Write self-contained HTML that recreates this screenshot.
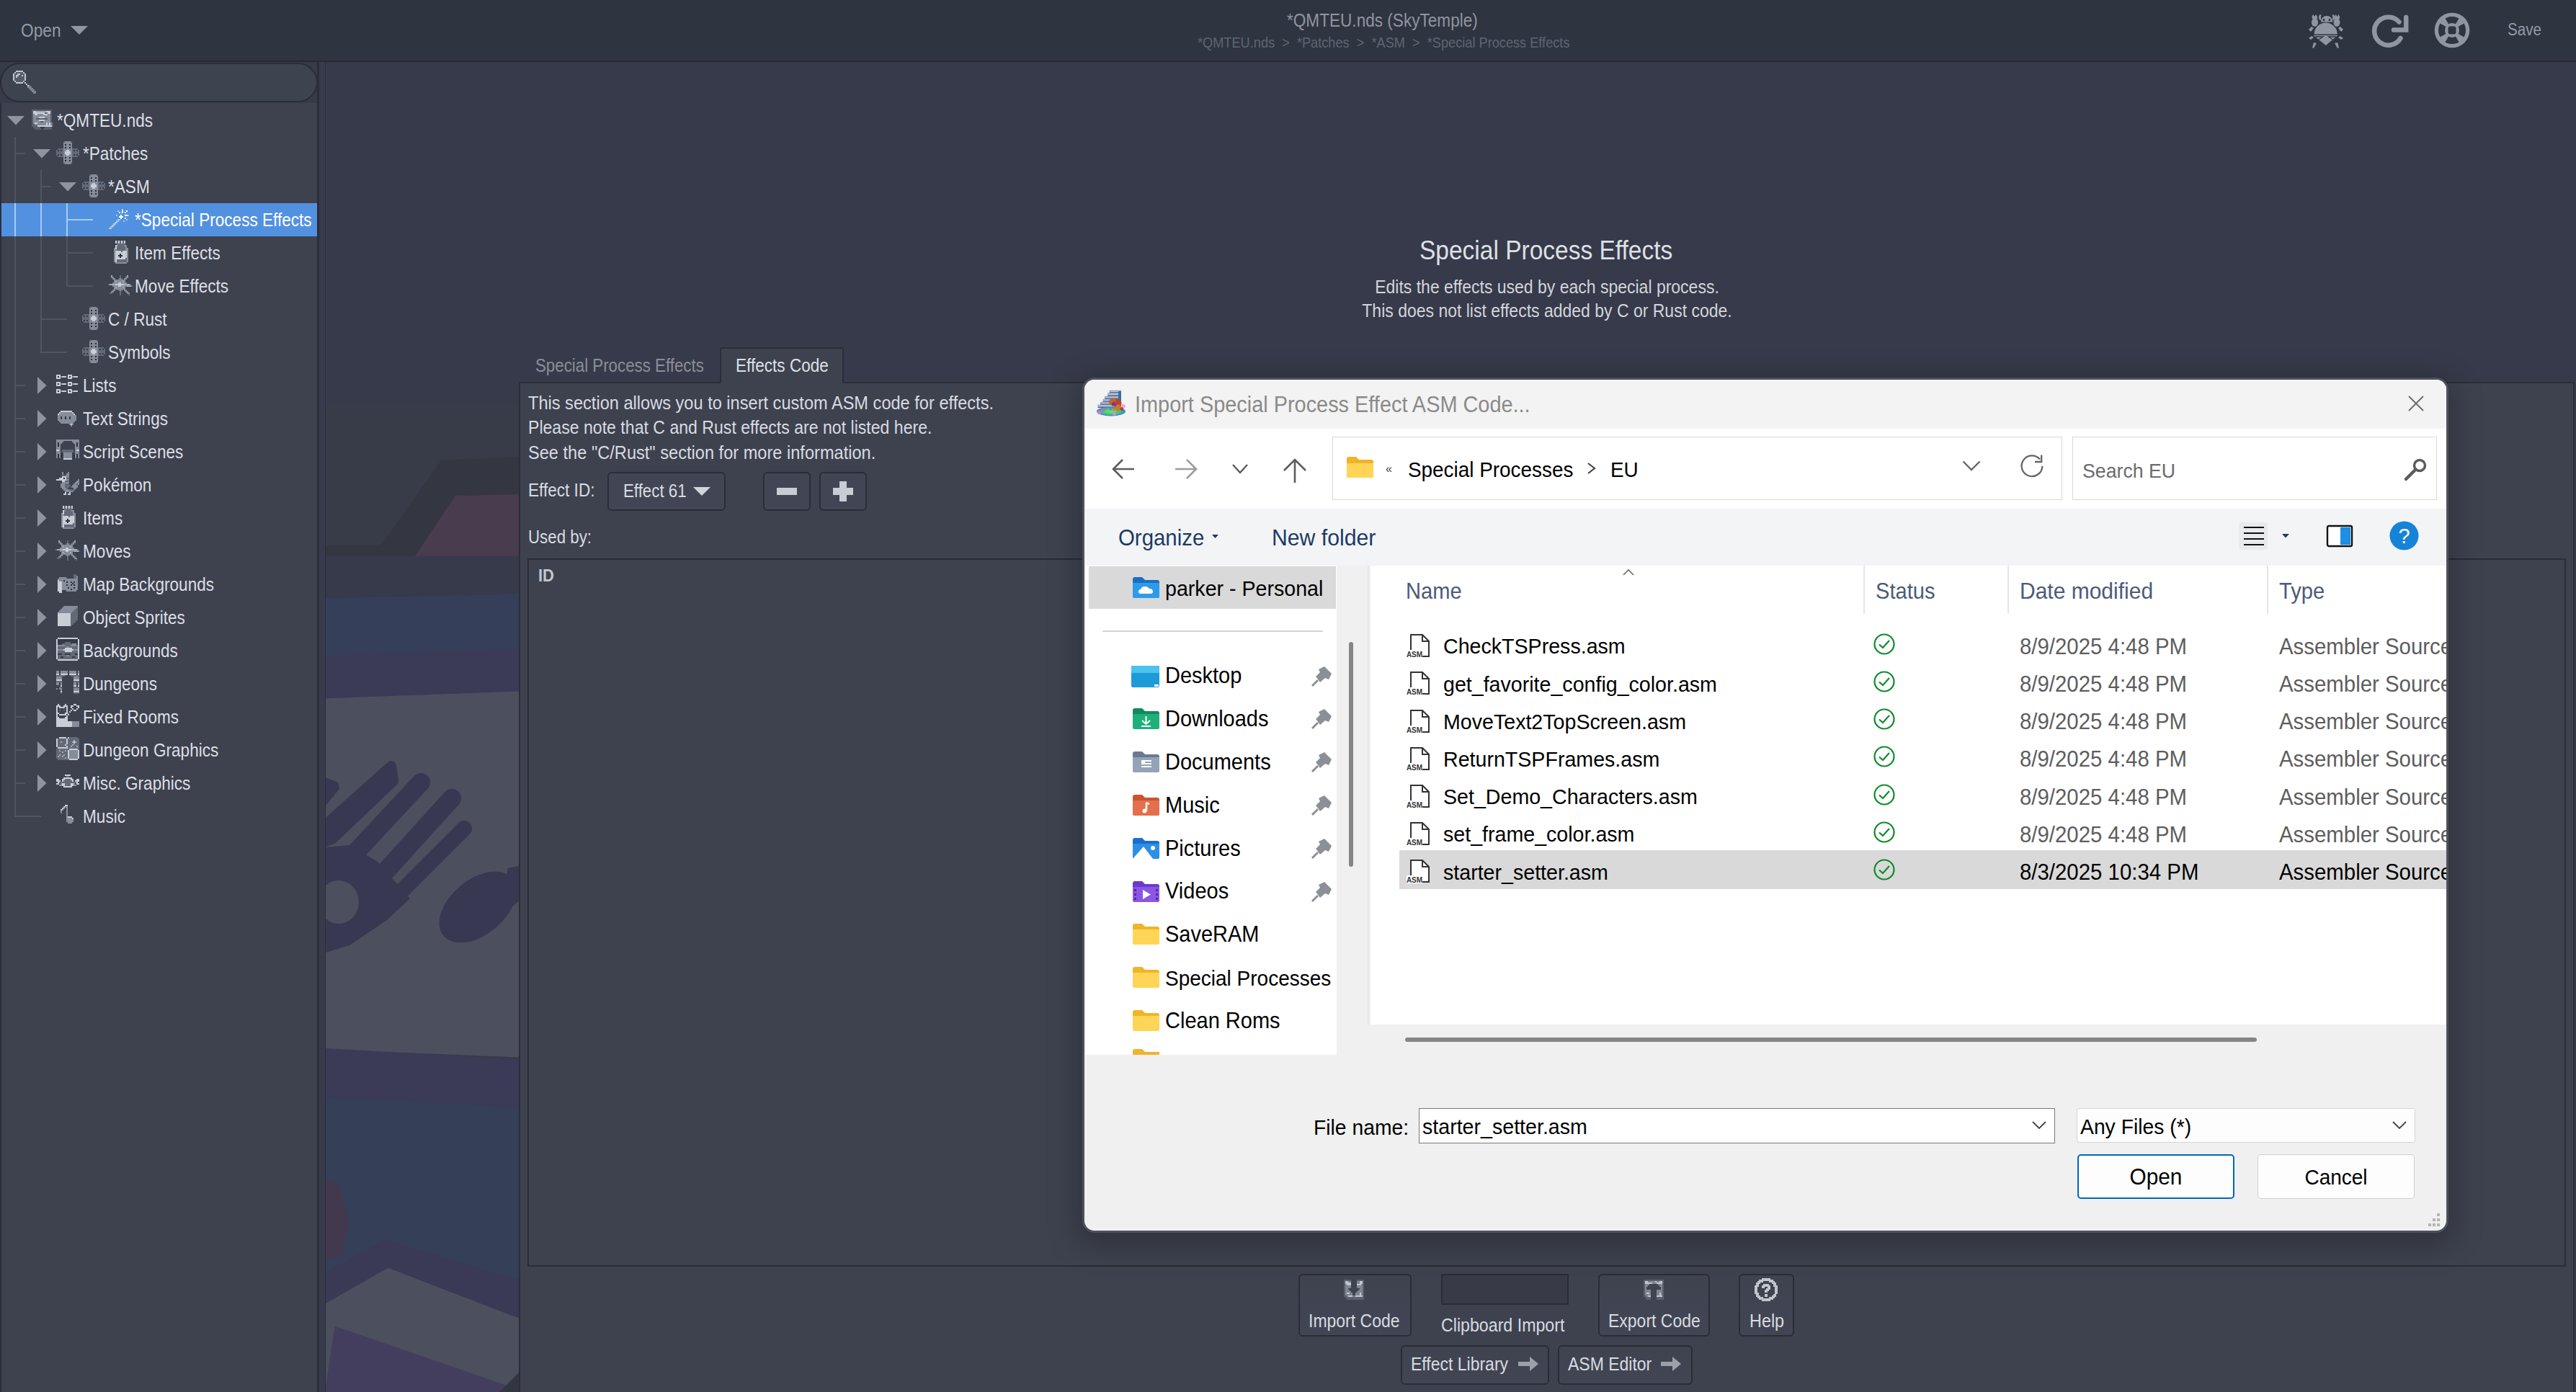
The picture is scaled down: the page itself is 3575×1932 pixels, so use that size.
<!DOCTYPE html><html><head><meta charset="utf-8"><style>
html,body{margin:0;padding:0;} body{width:3575px;height:1932px;overflow:hidden;position:relative;background:#383b4a;font-family:"Liberation Sans", sans-serif;}
.t{position:absolute;white-space:pre;} .r{position:absolute;box-sizing:border-box;} svg{position:absolute;overflow:visible;}
</style></head><body>
<div class="r" style="left:0.0px;top:0.0px;width:3575.0px;height:84.0px;background:#2f3441;"></div>
<div class="r" style="left:0.0px;top:84.0px;width:3575.0px;height:2.0px;background:#262a33;"></div>
<div class="t" style="left:28.7px;top:30.0px;font-size:25.42px;line-height:25.42px;color:#939aa6;font-weight:normal;transform:scaleX(0.8929);transform-origin:left top;">Open</div>
<svg style="left:98.0px;top:36.0px;" width="24" height="12" viewBox="0 0 24 12"><polygon points="0,0 24,0 12,12" fill="#8e96a2"/></svg>
<div class="t" style="left:1785.7px;top:15.5px;font-size:25.31px;line-height:25.31px;color:#8f95a0;font-weight:normal;transform:scaleX(0.8929);transform-origin:left top;">*QMTEU.nds (SkyTemple)</div>
<div class="t" style="left:1662.0px;top:49.2px;font-size:20.38px;line-height:20.38px;color:#5f6571;font-weight:normal;transform:scaleX(0.8929);transform-origin:left top;">*QMTEU.nds  &gt;  *Patches  &gt;  *ASM  &gt;  *Special Process Effects</div>
<div class="t" style="left:3480.0px;top:30.4px;font-size:23.07px;line-height:23.07px;color:#939aa6;font-weight:normal;transform:scaleX(0.8929);transform-origin:left top;">Save</div>
<svg style="left:3203.0px;top:17.0px;" width="50" height="50" viewBox="0 0 50 50"><g fill="#8f96a1">
<path d="M8.6 30.6 A16.1 16.1 0 0 1 40.8 30.6 Z"/>
<path d="M7.5 32 L41.5 32 L24.8 46 Z"/>
<path d="M17.8 13.4 A8.3 8.3 0 0 1 34.4 13.4 Z"/>
<path d="M16.5 3 Q13.5 7 16.5 11 L18.5 10 Q17 7 18.5 4Z"/><path d="M35.7 3 Q38.7 7 35.7 11 L33.7 10 Q35.2 7 33.7 4Z"/>
<ellipse cx="9.5" cy="14" rx="4.5" ry="6"/><ellipse cx="40" cy="14" rx="4.5" ry="6"/>
<path d="M5.5 6 L7 3 L9 6 L11 3 L13 6 L13 9 L6 9Z"/><path d="M37 6 L38.5 3 L40.5 6 L42.5 3 L44 6 L44 9 L37 9Z"/>
<path d="M1 24 L5 20 L8 22 L4 27Z"/><path d="M49 24 L45 20 L42 22 L46 27Z"/>
<path d="M1 36 L5 33 L8 35 L4 38Z"/><path d="M49 36 L45 33 L42 35 L46 38Z"/>
<path d="M6 49 L8 42 L12 43 L8 50Z"/><path d="M43 49 L41 42 L37 43 L41 50Z"/>
</g>
<g fill="#2f3441"><circle cx="22" cy="10.5" r="1.5"/><circle cx="30" cy="10.5" r="1.5"/></g>
<g fill="none" stroke="#2f3441" stroke-width="1.3"><path d="M11 34 L21 34 L12 40Z"/><path d="M38.5 34 L28.5 34 L37.5 40Z"/></g></svg>
<svg style="left:3289.0px;top:19.0px;" width="56" height="50" viewBox="0 0 56 50"><path d="M42.5 34 A19.5 19.5 0 1 1 40.5 11.5" fill="none" stroke="#8f96a1" stroke-width="6.5" stroke-linecap="round"/><path d="M50.2 5 L50.2 22.5 L33 22.5" fill="none" stroke="#8f96a1" stroke-width="6.5" stroke-linecap="round" stroke-linejoin="miter"/></svg>
<svg style="left:3378.0px;top:17.0px;" width="50" height="50" viewBox="0 0 50 50"><circle cx="25" cy="25" r="24.3" fill="#8f96a1"/><circle cx="25" cy="25" r="14.5" fill="none" stroke="#2f3441" stroke-width="9"/><path d="M31.93 29.00 L42.32 35.00 L35.00 42.32 L29.00 31.93Z" fill="#8f96a1"/><path d="M21.00 31.93 L15.00 42.32 L7.68 35.00 L18.07 29.00Z" fill="#8f96a1"/><path d="M18.07 21.00 L7.68 15.00 L15.00 7.68 L21.00 18.07Z" fill="#8f96a1"/><path d="M29.00 18.07 L35.00 7.68 L42.32 15.00 L31.93 21.00Z" fill="#8f96a1"/><rect x="19.5" y="19.5" width="11" height="11" rx="3" fill="#2f3441"/></svg>
<div class="r" style="left:0.0px;top:86.0px;width:442.0px;height:1846.0px;background:#363a49;"></div>
<div class="r" style="left:0.0px;top:86.5px;width:441.0px;height:55.0px;background:#3e4350;border:2px solid #2b2e39;border-radius:28px;"></div>
<svg style="left:18.0px;top:98.0px;" width="32" height="32" viewBox="0 0 32 32"><rect x="4" y="0" width="10" height="2" fill="#c0c5d0"/><rect x="2" y="2" width="2" height="2" fill="#c0c5d0"/><rect x="4" y="2" width="10" height="2" fill="#575c69"/><rect x="14" y="2" width="2" height="2" fill="#c0c5d0"/><rect x="0" y="4" width="2" height="2" fill="#c0c5d0"/><rect x="2" y="4" width="4" height="2" fill="#575c69"/><rect x="6" y="4" width="4" height="2" fill="#c0c5d0"/><rect x="10" y="4" width="6" height="2" fill="#575c69"/><rect x="16" y="4" width="2" height="2" fill="#c0c5d0"/><rect x="0" y="6" width="2" height="2" fill="#c0c5d0"/><rect x="2" y="6" width="2" height="2" fill="#575c69"/><rect x="4" y="6" width="4" height="2" fill="#c0c5d0"/><rect x="8" y="6" width="4" height="2" fill="#575c69"/><rect x="12" y="6" width="2" height="2" fill="#c0c5d0"/><rect x="14" y="6" width="2" height="2" fill="#575c69"/><rect x="16" y="6" width="2" height="2" fill="#c0c5d0"/><rect x="0" y="8" width="2" height="2" fill="#c0c5d0"/><rect x="2" y="8" width="2" height="2" fill="#575c69"/><rect x="4" y="8" width="2" height="2" fill="#c0c5d0"/><rect x="6" y="8" width="10" height="2" fill="#575c69"/><rect x="16" y="8" width="2" height="2" fill="#c0c5d0"/><rect x="0" y="10" width="2" height="2" fill="#c0c5d0"/><rect x="2" y="10" width="14" height="2" fill="#575c69"/><rect x="16" y="10" width="2" height="2" fill="#c0c5d0"/><rect x="0" y="12" width="2" height="2" fill="#c0c5d0"/><rect x="2" y="12" width="14" height="2" fill="#575c69"/><rect x="16" y="12" width="2" height="2" fill="#c0c5d0"/><rect x="2" y="14" width="2" height="2" fill="#c0c5d0"/><rect x="4" y="14" width="10" height="2" fill="#575c69"/><rect x="14" y="14" width="2" height="2" fill="#c0c5d0"/><rect x="4" y="16" width="10" height="2" fill="#c0c5d0"/><rect x="16" y="16" width="2" height="2" fill="#c0c5d0"/><rect x="18" y="18" width="2" height="2" fill="#c0c5d0"/><rect x="20" y="20" width="2" height="2" fill="#c0c5d0"/><rect x="22" y="20" width="2" height="2" fill="#7d8391"/><rect x="20" y="22" width="6" height="2" fill="#7d8391"/><rect x="22" y="24" width="6" height="2" fill="#7d8391"/><rect x="24" y="26" width="6" height="2" fill="#7d8391"/><rect x="26" y="28" width="6" height="2" fill="#7d8391"/><rect x="28" y="30" width="4" height="2" fill="#7d8391"/></svg>
<div class="r" style="left:0.0px;top:143.0px;width:440.0px;height:1789.0px;background:#3e424f;border-left:2px solid #2b2e38;"></div>
<div class="r" style="left:440.0px;top:86.0px;width:12.0px;height:1846.0px;background:#383b4b;border-left:3.6px solid #2b2d38;border-right:1.9px solid #2b2d38;"></div>
<div class="r" style="left:2.0px;top:282.0px;width:438.0px;height:46.0px;background:#5291e0;"></div>
<div class="r" style="left:20.0px;top:190.0px;width:2.0px;height:943.0px;background:#50545f;"></div>
<div class="r" style="left:56.0px;top:236.0px;width:2.0px;height:253.0px;background:#50545f;"></div>
<div class="r" style="left:92.0px;top:282.0px;width:2.0px;height:115.0px;background:#50545f;"></div>
<div class="r" style="left:20.0px;top:212.0px;width:15.0px;height:2.0px;background:#50545f;"></div>
<div class="r" style="left:56.0px;top:258.0px;width:15.0px;height:2.0px;background:#50545f;"></div>
<div class="r" style="left:92.0px;top:304.0px;width:37.0px;height:2.0px;background:#50545f;"></div>
<div class="r" style="left:92.0px;top:350.0px;width:37.0px;height:2.0px;background:#50545f;"></div>
<div class="r" style="left:92.0px;top:396.0px;width:37.0px;height:2.0px;background:#50545f;"></div>
<div class="r" style="left:56.0px;top:442.0px;width:37.0px;height:2.0px;background:#50545f;"></div>
<div class="r" style="left:56.0px;top:488.0px;width:37.0px;height:2.0px;background:#50545f;"></div>
<div class="r" style="left:20.0px;top:534.0px;width:15.0px;height:2.0px;background:#50545f;"></div>
<div class="r" style="left:20.0px;top:580.0px;width:15.0px;height:2.0px;background:#50545f;"></div>
<div class="r" style="left:20.0px;top:626.0px;width:15.0px;height:2.0px;background:#50545f;"></div>
<div class="r" style="left:20.0px;top:672.0px;width:15.0px;height:2.0px;background:#50545f;"></div>
<div class="r" style="left:20.0px;top:718.0px;width:15.0px;height:2.0px;background:#50545f;"></div>
<div class="r" style="left:20.0px;top:764.0px;width:15.0px;height:2.0px;background:#50545f;"></div>
<div class="r" style="left:20.0px;top:810.0px;width:15.0px;height:2.0px;background:#50545f;"></div>
<div class="r" style="left:20.0px;top:856.0px;width:15.0px;height:2.0px;background:#50545f;"></div>
<div class="r" style="left:20.0px;top:902.0px;width:15.0px;height:2.0px;background:#50545f;"></div>
<div class="r" style="left:20.0px;top:948.0px;width:15.0px;height:2.0px;background:#50545f;"></div>
<div class="r" style="left:20.0px;top:994.0px;width:15.0px;height:2.0px;background:#50545f;"></div>
<div class="r" style="left:20.0px;top:1040.0px;width:15.0px;height:2.0px;background:#50545f;"></div>
<div class="r" style="left:20.0px;top:1086.0px;width:15.0px;height:2.0px;background:#50545f;"></div>
<div class="r" style="left:20.0px;top:1132.0px;width:37.0px;height:2.0px;background:#50545f;"></div>
<div class="r" style="left:20.0px;top:282.0px;width:2.0px;height:46.0px;background:#a9c9f2;"></div>
<div class="r" style="left:56.0px;top:282.0px;width:2.0px;height:46.0px;background:#a9c9f2;"></div>
<div class="r" style="left:92.0px;top:282.0px;width:2.0px;height:46.0px;background:#a9c9f2;"></div>
<div class="r" style="left:92.0px;top:304.0px;width:37.0px;height:2.0px;background:#a9c9f2;"></div>
<svg style="left:10.0px;top:161.0px;" width="24" height="13" viewBox="0 0 24 13"><polygon points="0,0 24,0 12,12.5" fill="#8e939e"/></svg>
<svg style="left:44.0px;top:152.0px;" width="30" height="28" viewBox="0 0 30 28"><rect x="0" y="0" width="28" height="2" fill="#5a5f6b"/><rect x="0" y="2" width="2" height="2" fill="#5a5f6b"/><rect x="2" y="2" width="4" height="2" fill="#c8cdd6"/><rect x="6" y="2" width="14" height="2" fill="#a3a9b4"/><rect x="20" y="2" width="6" height="2" fill="#c8cdd6"/><rect x="26" y="2" width="2" height="2" fill="#5a5f6b"/><rect x="0" y="4" width="2" height="2" fill="#5a5f6b"/><rect x="2" y="4" width="16" height="2" fill="#c8cdd6"/><rect x="18" y="4" width="4" height="2" fill="#646977"/><rect x="22" y="4" width="4" height="2" fill="#c8cdd6"/><rect x="26" y="4" width="2" height="2" fill="#5a5f6b"/><rect x="0" y="6" width="2" height="2" fill="#5a5f6b"/><rect x="2" y="6" width="2" height="2" fill="#868c99"/><rect x="4" y="6" width="4" height="2" fill="#c8cdd6"/><rect x="8" y="6" width="8" height="2" fill="#868c99"/><rect x="16" y="6" width="6" height="2" fill="#c8cdd6"/><rect x="22" y="6" width="4" height="2" fill="#868c99"/><rect x="26" y="6" width="2" height="2" fill="#5a5f6b"/><rect x="0" y="8" width="2" height="2" fill="#5a5f6b"/><rect x="2" y="8" width="24" height="2" fill="#868c99"/><rect x="26" y="8" width="2" height="2" fill="#5a5f6b"/><rect x="0" y="10" width="2" height="2" fill="#5a5f6b"/><rect x="2" y="10" width="8" height="2" fill="#868c99"/><rect x="10" y="10" width="8" height="2" fill="#c8cdd6"/><rect x="18" y="10" width="8" height="2" fill="#868c99"/><rect x="26" y="10" width="2" height="2" fill="#5a5f6b"/><rect x="0" y="12" width="2" height="2" fill="#5a5f6b"/><rect x="2" y="12" width="4" height="2" fill="#868c99"/><rect x="6" y="12" width="16" height="2" fill="#5a5f6b"/><rect x="22" y="12" width="4" height="2" fill="#868c99"/><rect x="26" y="12" width="2" height="2" fill="#5a5f6b"/><rect x="0" y="14" width="2" height="2" fill="#5a5f6b"/><rect x="2" y="14" width="8" height="2" fill="#868c99"/><rect x="10" y="14" width="8" height="2" fill="#c8cdd6"/><rect x="18" y="14" width="8" height="2" fill="#868c99"/><rect x="26" y="14" width="2" height="2" fill="#5a5f6b"/><rect x="0" y="16" width="2" height="2" fill="#5a5f6b"/><rect x="2" y="16" width="10" height="2" fill="#868c99"/><rect x="12" y="16" width="4" height="2" fill="#5a5f6b"/><rect x="16" y="16" width="10" height="2" fill="#868c99"/><rect x="26" y="16" width="2" height="2" fill="#5a5f6b"/><rect x="0" y="18" width="2" height="2" fill="#5a5f6b"/><rect x="2" y="18" width="2" height="2" fill="#868c99"/><rect x="4" y="18" width="4" height="2" fill="#c8cdd6"/><rect x="8" y="18" width="12" height="2" fill="#868c99"/><rect x="20" y="18" width="2" height="2" fill="#c8cdd6"/><rect x="22" y="18" width="2" height="2" fill="#868c99"/><rect x="24" y="18" width="2" height="2" fill="#c8cdd6"/><rect x="26" y="18" width="2" height="2" fill="#868c99"/><rect x="28" y="18" width="2" height="2" fill="#5a5f6b"/><rect x="0" y="20" width="4" height="2" fill="#5a5f6b"/><rect x="4" y="20" width="16" height="2" fill="#868c99"/><rect x="20" y="20" width="2" height="2" fill="#c8cdd6"/><rect x="22" y="20" width="2" height="2" fill="#868c99"/><rect x="24" y="20" width="2" height="2" fill="#c8cdd6"/><rect x="26" y="20" width="2" height="2" fill="#868c99"/><rect x="28" y="20" width="2" height="2" fill="#5a5f6b"/><rect x="0" y="22" width="8" height="2" fill="#5a5f6b"/><rect x="8" y="22" width="20" height="2" fill="#c8cdd6"/><rect x="28" y="22" width="2" height="2" fill="#5a5f6b"/><rect x="2" y="24" width="10" height="2" fill="#5a5f6b"/><rect x="12" y="24" width="6" height="2" fill="#363a46"/><rect x="18" y="24" width="10" height="2" fill="#5a5f6b"/><rect x="4" y="26" width="10" height="2" fill="#5a5f6b"/><rect x="14" y="26" width="2" height="2" fill="#363a46"/><rect x="16" y="26" width="12" height="2" fill="#5a5f6b"/></svg>
<div class="t" style="left:79.0px;top:154.7px;font-size:25.31px;line-height:25.31px;color:#dcdfe5;font-weight:normal;transform:scaleX(0.8929);transform-origin:left top;">*QMTEU.nds</div>
<svg style="left:46.0px;top:207.0px;" width="24" height="13" viewBox="0 0 24 13"><polygon points="0,0 24,0 12,12.5" fill="#8e939e"/></svg>
<svg style="left:78.0px;top:196.0px;" width="32" height="32" viewBox="0 0 32 32"><rect x="10" y="0" width="2" height="2" fill="#5a5f6b"/><rect x="12" y="0" width="8" height="2" fill="#858b98"/><rect x="20" y="0" width="2" height="2" fill="#5a5f6b"/><rect x="10" y="2" width="12" height="2" fill="#858b98"/><rect x="10" y="4" width="2" height="2" fill="#858b98"/><rect x="12" y="4" width="2" height="2" fill="#2c303b"/><rect x="14" y="4" width="4" height="2" fill="#858b98"/><rect x="18" y="4" width="2" height="2" fill="#2c303b"/><rect x="20" y="4" width="2" height="2" fill="#858b98"/><rect x="10" y="6" width="12" height="2" fill="#858b98"/><rect x="10" y="8" width="2" height="2" fill="#858b98"/><rect x="12" y="8" width="2" height="2" fill="#2c303b"/><rect x="14" y="8" width="4" height="2" fill="#858b98"/><rect x="18" y="8" width="2" height="2" fill="#2c303b"/><rect x="20" y="8" width="2" height="2" fill="#858b98"/><rect x="2" y="10" width="8" height="2" fill="#646977"/><rect x="10" y="10" width="12" height="2" fill="#858b98"/><rect x="22" y="10" width="8" height="2" fill="#646977"/><rect x="0" y="12" width="2" height="2" fill="#646977"/><rect x="2" y="12" width="2" height="2" fill="#363a46"/><rect x="4" y="12" width="2" height="2" fill="#646977"/><rect x="6" y="12" width="2" height="2" fill="#363a46"/><rect x="8" y="12" width="2" height="2" fill="#646977"/><rect x="10" y="12" width="4" height="2" fill="#858b98"/><rect x="14" y="12" width="4" height="2" fill="#c8cdd6"/><rect x="18" y="12" width="4" height="2" fill="#858b98"/><rect x="22" y="12" width="2" height="2" fill="#646977"/><rect x="24" y="12" width="2" height="2" fill="#363a46"/><rect x="26" y="12" width="2" height="2" fill="#646977"/><rect x="28" y="12" width="2" height="2" fill="#363a46"/><rect x="30" y="12" width="2" height="2" fill="#646977"/><rect x="0" y="14" width="10" height="2" fill="#646977"/><rect x="10" y="14" width="2" height="2" fill="#858b98"/><rect x="12" y="14" width="8" height="2" fill="#c8cdd6"/><rect x="20" y="14" width="2" height="2" fill="#858b98"/><rect x="22" y="14" width="10" height="2" fill="#646977"/><rect x="0" y="16" width="10" height="2" fill="#646977"/><rect x="10" y="16" width="2" height="2" fill="#858b98"/><rect x="12" y="16" width="8" height="2" fill="#c8cdd6"/><rect x="20" y="16" width="2" height="2" fill="#858b98"/><rect x="22" y="16" width="10" height="2" fill="#646977"/><rect x="0" y="18" width="2" height="2" fill="#646977"/><rect x="2" y="18" width="2" height="2" fill="#363a46"/><rect x="4" y="18" width="2" height="2" fill="#646977"/><rect x="6" y="18" width="2" height="2" fill="#363a46"/><rect x="8" y="18" width="2" height="2" fill="#646977"/><rect x="10" y="18" width="4" height="2" fill="#858b98"/><rect x="14" y="18" width="4" height="2" fill="#c8cdd6"/><rect x="18" y="18" width="4" height="2" fill="#858b98"/><rect x="22" y="18" width="2" height="2" fill="#646977"/><rect x="24" y="18" width="2" height="2" fill="#363a46"/><rect x="26" y="18" width="2" height="2" fill="#646977"/><rect x="28" y="18" width="2" height="2" fill="#363a46"/><rect x="30" y="18" width="2" height="2" fill="#646977"/><rect x="2" y="20" width="8" height="2" fill="#646977"/><rect x="10" y="20" width="12" height="2" fill="#858b98"/><rect x="22" y="20" width="8" height="2" fill="#646977"/><rect x="10" y="22" width="2" height="2" fill="#858b98"/><rect x="12" y="22" width="2" height="2" fill="#2c303b"/><rect x="14" y="22" width="4" height="2" fill="#858b98"/><rect x="18" y="22" width="2" height="2" fill="#2c303b"/><rect x="20" y="22" width="2" height="2" fill="#858b98"/><rect x="10" y="24" width="12" height="2" fill="#858b98"/><rect x="10" y="26" width="2" height="2" fill="#858b98"/><rect x="12" y="26" width="2" height="2" fill="#2c303b"/><rect x="14" y="26" width="4" height="2" fill="#858b98"/><rect x="18" y="26" width="2" height="2" fill="#2c303b"/><rect x="20" y="26" width="2" height="2" fill="#858b98"/><rect x="10" y="28" width="12" height="2" fill="#858b98"/><rect x="10" y="30" width="2" height="2" fill="#5a5f6b"/><rect x="12" y="30" width="8" height="2" fill="#858b98"/><rect x="20" y="30" width="2" height="2" fill="#5a5f6b"/></svg>
<div class="t" style="left:114.7px;top:200.7px;font-size:25.31px;line-height:25.31px;color:#dcdfe5;font-weight:normal;transform:scaleX(0.8929);transform-origin:left top;">*Patches</div>
<svg style="left:82.0px;top:253.0px;" width="24" height="13" viewBox="0 0 24 13"><polygon points="0,0 24,0 12,12.5" fill="#8e939e"/></svg>
<svg style="left:114.0px;top:242.0px;" width="32" height="32" viewBox="0 0 32 32"><rect x="10" y="0" width="2" height="2" fill="#5a5f6b"/><rect x="12" y="0" width="8" height="2" fill="#858b98"/><rect x="20" y="0" width="2" height="2" fill="#5a5f6b"/><rect x="10" y="2" width="12" height="2" fill="#858b98"/><rect x="10" y="4" width="2" height="2" fill="#858b98"/><rect x="12" y="4" width="2" height="2" fill="#2c303b"/><rect x="14" y="4" width="4" height="2" fill="#858b98"/><rect x="18" y="4" width="2" height="2" fill="#2c303b"/><rect x="20" y="4" width="2" height="2" fill="#858b98"/><rect x="10" y="6" width="12" height="2" fill="#858b98"/><rect x="10" y="8" width="2" height="2" fill="#858b98"/><rect x="12" y="8" width="2" height="2" fill="#2c303b"/><rect x="14" y="8" width="4" height="2" fill="#858b98"/><rect x="18" y="8" width="2" height="2" fill="#2c303b"/><rect x="20" y="8" width="2" height="2" fill="#858b98"/><rect x="2" y="10" width="8" height="2" fill="#646977"/><rect x="10" y="10" width="12" height="2" fill="#858b98"/><rect x="22" y="10" width="8" height="2" fill="#646977"/><rect x="0" y="12" width="2" height="2" fill="#646977"/><rect x="2" y="12" width="2" height="2" fill="#363a46"/><rect x="4" y="12" width="2" height="2" fill="#646977"/><rect x="6" y="12" width="2" height="2" fill="#363a46"/><rect x="8" y="12" width="2" height="2" fill="#646977"/><rect x="10" y="12" width="4" height="2" fill="#858b98"/><rect x="14" y="12" width="4" height="2" fill="#c8cdd6"/><rect x="18" y="12" width="4" height="2" fill="#858b98"/><rect x="22" y="12" width="2" height="2" fill="#646977"/><rect x="24" y="12" width="2" height="2" fill="#363a46"/><rect x="26" y="12" width="2" height="2" fill="#646977"/><rect x="28" y="12" width="2" height="2" fill="#363a46"/><rect x="30" y="12" width="2" height="2" fill="#646977"/><rect x="0" y="14" width="10" height="2" fill="#646977"/><rect x="10" y="14" width="2" height="2" fill="#858b98"/><rect x="12" y="14" width="8" height="2" fill="#c8cdd6"/><rect x="20" y="14" width="2" height="2" fill="#858b98"/><rect x="22" y="14" width="10" height="2" fill="#646977"/><rect x="0" y="16" width="10" height="2" fill="#646977"/><rect x="10" y="16" width="2" height="2" fill="#858b98"/><rect x="12" y="16" width="8" height="2" fill="#c8cdd6"/><rect x="20" y="16" width="2" height="2" fill="#858b98"/><rect x="22" y="16" width="10" height="2" fill="#646977"/><rect x="0" y="18" width="2" height="2" fill="#646977"/><rect x="2" y="18" width="2" height="2" fill="#363a46"/><rect x="4" y="18" width="2" height="2" fill="#646977"/><rect x="6" y="18" width="2" height="2" fill="#363a46"/><rect x="8" y="18" width="2" height="2" fill="#646977"/><rect x="10" y="18" width="4" height="2" fill="#858b98"/><rect x="14" y="18" width="4" height="2" fill="#c8cdd6"/><rect x="18" y="18" width="4" height="2" fill="#858b98"/><rect x="22" y="18" width="2" height="2" fill="#646977"/><rect x="24" y="18" width="2" height="2" fill="#363a46"/><rect x="26" y="18" width="2" height="2" fill="#646977"/><rect x="28" y="18" width="2" height="2" fill="#363a46"/><rect x="30" y="18" width="2" height="2" fill="#646977"/><rect x="2" y="20" width="8" height="2" fill="#646977"/><rect x="10" y="20" width="12" height="2" fill="#858b98"/><rect x="22" y="20" width="8" height="2" fill="#646977"/><rect x="10" y="22" width="2" height="2" fill="#858b98"/><rect x="12" y="22" width="2" height="2" fill="#2c303b"/><rect x="14" y="22" width="4" height="2" fill="#858b98"/><rect x="18" y="22" width="2" height="2" fill="#2c303b"/><rect x="20" y="22" width="2" height="2" fill="#858b98"/><rect x="10" y="24" width="12" height="2" fill="#858b98"/><rect x="10" y="26" width="2" height="2" fill="#858b98"/><rect x="12" y="26" width="2" height="2" fill="#2c303b"/><rect x="14" y="26" width="4" height="2" fill="#858b98"/><rect x="18" y="26" width="2" height="2" fill="#2c303b"/><rect x="20" y="26" width="2" height="2" fill="#858b98"/><rect x="10" y="28" width="12" height="2" fill="#858b98"/><rect x="10" y="30" width="2" height="2" fill="#5a5f6b"/><rect x="12" y="30" width="8" height="2" fill="#858b98"/><rect x="20" y="30" width="2" height="2" fill="#5a5f6b"/></svg>
<div class="t" style="left:150.0px;top:246.7px;font-size:25.31px;line-height:25.31px;color:#dcdfe5;font-weight:normal;transform:scaleX(0.8929);transform-origin:left top;">*ASM</div>
<svg style="left:151.0px;top:290.0px;" width="28" height="28" viewBox="0 0 28 28"><rect x="18" y="0" width="2" height="2" fill="#a9c8f0"/><rect x="12" y="2" width="2" height="2" fill="#a9c8f0"/><rect x="18" y="2" width="2" height="2" fill="#ffffff"/><rect x="24" y="2" width="2" height="2" fill="#ffffff"/><rect x="14" y="4" width="2" height="2" fill="#ffffff"/><rect x="18" y="4" width="2" height="2" fill="#ffffff"/><rect x="22" y="4" width="2" height="2" fill="#ffffff"/><rect x="10" y="8" width="2" height="2" fill="#a9c8f0"/><rect x="16" y="8" width="2" height="2" fill="#ffffff"/><rect x="22" y="8" width="4" height="2" fill="#ffffff"/><rect x="26" y="8" width="2" height="2" fill="#a9c8f0"/><rect x="14" y="10" width="6" height="2" fill="#ffffff"/><rect x="16" y="12" width="2" height="2" fill="#ffffff"/><rect x="22" y="12" width="2" height="2" fill="#ffffff"/><rect x="12" y="14" width="4" height="2" fill="#a9c8f0"/><rect x="24" y="14" width="2" height="2" fill="#a9c8f0"/><rect x="10" y="16" width="4" height="2" fill="#a9c8f0"/><rect x="20" y="16" width="2" height="2" fill="#a9c8f0"/><rect x="8" y="18" width="4" height="2" fill="#a9c8f0"/><rect x="6" y="20" width="4" height="2" fill="#a9c8f0"/><rect x="4" y="22" width="4" height="2" fill="#a9c8f0"/><rect x="2" y="24" width="4" height="2" fill="#a9c8f0"/><rect x="0" y="26" width="4" height="2" fill="#a9c8f0"/></svg>
<div class="t" style="left:187.0px;top:292.7px;font-size:25.31px;line-height:25.31px;color:#ffffff;font-weight:normal;transform:scaleX(0.8929);transform-origin:left top;">*Special Process Effects</div>
<svg style="left:158.0px;top:334.0px;" width="20" height="32" viewBox="0 0 20 32"><rect x="2" y="0" width="2" height="2" fill="#c8cdd6"/><rect x="4" y="0" width="2" height="2" fill="#646977"/><rect x="6" y="0" width="2" height="2" fill="#c8cdd6"/><rect x="8" y="0" width="2" height="2" fill="#646977"/><rect x="10" y="0" width="2" height="2" fill="#c8cdd6"/><rect x="12" y="0" width="2" height="2" fill="#646977"/><rect x="14" y="0" width="2" height="2" fill="#c8cdd6"/><rect x="2" y="2" width="2" height="2" fill="#c8cdd6"/><rect x="4" y="2" width="2" height="2" fill="#646977"/><rect x="6" y="2" width="2" height="2" fill="#c8cdd6"/><rect x="8" y="2" width="2" height="2" fill="#646977"/><rect x="10" y="2" width="2" height="2" fill="#c8cdd6"/><rect x="12" y="2" width="2" height="2" fill="#646977"/><rect x="14" y="2" width="2" height="2" fill="#c8cdd6"/><rect x="4" y="4" width="12" height="2" fill="#646977"/><rect x="2" y="6" width="2" height="2" fill="#c8cdd6"/><rect x="4" y="6" width="2" height="2" fill="#868c99"/><rect x="6" y="6" width="8" height="2" fill="#646977"/><rect x="14" y="6" width="4" height="2" fill="#868c99"/><rect x="2" y="8" width="2" height="2" fill="#c8cdd6"/><rect x="4" y="8" width="12" height="2" fill="#646977"/><rect x="16" y="8" width="2" height="2" fill="#868c99"/><rect x="0" y="10" width="2" height="2" fill="#868c99"/><rect x="2" y="10" width="2" height="2" fill="#c8cdd6"/><rect x="4" y="10" width="12" height="2" fill="#646977"/><rect x="16" y="10" width="4" height="2" fill="#868c99"/><rect x="0" y="12" width="4" height="2" fill="#868c99"/><rect x="4" y="12" width="12" height="2" fill="#646977"/><rect x="16" y="12" width="4" height="2" fill="#868c99"/><rect x="0" y="14" width="2" height="2" fill="#868c99"/><rect x="2" y="14" width="8" height="2" fill="#c8cdd6"/><rect x="10" y="14" width="2" height="2" fill="#646977"/><rect x="12" y="14" width="6" height="2" fill="#c8cdd6"/><rect x="18" y="14" width="2" height="2" fill="#868c99"/><rect x="0" y="16" width="2" height="2" fill="#868c99"/><rect x="2" y="16" width="16" height="2" fill="#c8cdd6"/><rect x="18" y="16" width="2" height="2" fill="#868c99"/><rect x="0" y="18" width="2" height="2" fill="#868c99"/><rect x="2" y="18" width="6" height="2" fill="#c8cdd6"/><rect x="8" y="18" width="2" height="2" fill="#2c303b"/><rect x="10" y="18" width="8" height="2" fill="#c8cdd6"/><rect x="18" y="18" width="2" height="2" fill="#868c99"/><rect x="0" y="20" width="2" height="2" fill="#868c99"/><rect x="2" y="20" width="4" height="2" fill="#c8cdd6"/><rect x="6" y="20" width="6" height="2" fill="#2c303b"/><rect x="12" y="20" width="6" height="2" fill="#c8cdd6"/><rect x="18" y="20" width="2" height="2" fill="#868c99"/><rect x="0" y="22" width="2" height="2" fill="#868c99"/><rect x="2" y="22" width="6" height="2" fill="#c8cdd6"/><rect x="8" y="22" width="2" height="2" fill="#2c303b"/><rect x="10" y="22" width="8" height="2" fill="#c8cdd6"/><rect x="18" y="22" width="2" height="2" fill="#868c99"/><rect x="0" y="24" width="2" height="2" fill="#868c99"/><rect x="2" y="24" width="14" height="2" fill="#c8cdd6"/><rect x="16" y="24" width="2" height="2" fill="#646977"/><rect x="18" y="24" width="2" height="2" fill="#868c99"/><rect x="0" y="26" width="2" height="2" fill="#868c99"/><rect x="2" y="26" width="2" height="2" fill="#c8cdd6"/><rect x="4" y="26" width="14" height="2" fill="#646977"/><rect x="18" y="26" width="2" height="2" fill="#868c99"/><rect x="0" y="28" width="2" height="2" fill="#868c99"/><rect x="2" y="28" width="2" height="2" fill="#c8cdd6"/><rect x="4" y="28" width="14" height="2" fill="#646977"/><rect x="18" y="28" width="2" height="2" fill="#868c99"/><rect x="2" y="30" width="16" height="2" fill="#868c99"/></svg>
<div class="t" style="left:187.0px;top:338.7px;font-size:25.31px;line-height:25.31px;color:#dcdfe5;font-weight:normal;transform:scaleX(0.8929);transform-origin:left top;">Item Effects</div>
<svg style="left:150.0px;top:382.0px;" width="34" height="28" viewBox="0 0 34 28"><rect x="4" y="0" width="2" height="2" fill="#a3a9b4"/><rect x="16" y="0" width="2" height="2" fill="#646977"/><rect x="26" y="0" width="2" height="2" fill="#a3a9b4"/><rect x="4" y="2" width="4" height="2" fill="#868c99"/><rect x="16" y="2" width="2" height="2" fill="#646977"/><rect x="24" y="2" width="4" height="2" fill="#868c99"/><rect x="6" y="4" width="4" height="2" fill="#868c99"/><rect x="14" y="4" width="2" height="2" fill="#646977"/><rect x="16" y="4" width="2" height="2" fill="#868c99"/><rect x="18" y="4" width="2" height="2" fill="#646977"/><rect x="22" y="4" width="4" height="2" fill="#868c99"/><rect x="8" y="6" width="16" height="2" fill="#868c99"/><rect x="8" y="8" width="2" height="2" fill="#868c99"/><rect x="10" y="8" width="2" height="2" fill="#a3a9b4"/><rect x="12" y="8" width="8" height="2" fill="#868c99"/><rect x="20" y="8" width="2" height="2" fill="#a3a9b4"/><rect x="22" y="8" width="2" height="2" fill="#868c99"/><rect x="6" y="10" width="8" height="2" fill="#868c99"/><rect x="14" y="10" width="4" height="2" fill="#c8cdd6"/><rect x="18" y="10" width="8" height="2" fill="#868c99"/><rect x="0" y="12" width="2" height="2" fill="#646977"/><rect x="2" y="12" width="8" height="2" fill="#a3a9b4"/><rect x="10" y="12" width="12" height="2" fill="#c8cdd6"/><rect x="22" y="12" width="8" height="2" fill="#a3a9b4"/><rect x="30" y="12" width="2" height="2" fill="#646977"/><rect x="6" y="14" width="8" height="2" fill="#868c99"/><rect x="14" y="14" width="4" height="2" fill="#c8cdd6"/><rect x="18" y="14" width="8" height="2" fill="#868c99"/><rect x="26" y="14" width="6" height="2" fill="#a3a9b4"/><rect x="32" y="14" width="2" height="2" fill="#646977"/><rect x="8" y="16" width="2" height="2" fill="#868c99"/><rect x="10" y="16" width="2" height="2" fill="#a3a9b4"/><rect x="12" y="16" width="8" height="2" fill="#868c99"/><rect x="20" y="16" width="2" height="2" fill="#a3a9b4"/><rect x="22" y="16" width="2" height="2" fill="#868c99"/><rect x="8" y="18" width="16" height="2" fill="#868c99"/><rect x="6" y="20" width="4" height="2" fill="#868c99"/><rect x="14" y="20" width="2" height="2" fill="#646977"/><rect x="16" y="20" width="2" height="2" fill="#868c99"/><rect x="18" y="20" width="2" height="2" fill="#646977"/><rect x="22" y="20" width="4" height="2" fill="#868c99"/><rect x="4" y="22" width="4" height="2" fill="#868c99"/><rect x="16" y="22" width="2" height="2" fill="#646977"/><rect x="24" y="22" width="4" height="2" fill="#868c99"/><rect x="2" y="24" width="4" height="2" fill="#646977"/><rect x="16" y="24" width="2" height="2" fill="#646977"/><rect x="26" y="24" width="4" height="2" fill="#868c99"/><rect x="16" y="26" width="2" height="2" fill="#646977"/><rect x="28" y="26" width="2" height="2" fill="#646977"/></svg>
<div class="t" style="left:187.0px;top:384.7px;font-size:25.31px;line-height:25.31px;color:#dcdfe5;font-weight:normal;transform:scaleX(0.8929);transform-origin:left top;">Move Effects</div>
<svg style="left:114.0px;top:426.0px;" width="32" height="32" viewBox="0 0 32 32"><rect x="10" y="0" width="2" height="2" fill="#5a5f6b"/><rect x="12" y="0" width="8" height="2" fill="#858b98"/><rect x="20" y="0" width="2" height="2" fill="#5a5f6b"/><rect x="10" y="2" width="12" height="2" fill="#858b98"/><rect x="10" y="4" width="2" height="2" fill="#858b98"/><rect x="12" y="4" width="2" height="2" fill="#2c303b"/><rect x="14" y="4" width="4" height="2" fill="#858b98"/><rect x="18" y="4" width="2" height="2" fill="#2c303b"/><rect x="20" y="4" width="2" height="2" fill="#858b98"/><rect x="10" y="6" width="12" height="2" fill="#858b98"/><rect x="10" y="8" width="2" height="2" fill="#858b98"/><rect x="12" y="8" width="2" height="2" fill="#2c303b"/><rect x="14" y="8" width="4" height="2" fill="#858b98"/><rect x="18" y="8" width="2" height="2" fill="#2c303b"/><rect x="20" y="8" width="2" height="2" fill="#858b98"/><rect x="2" y="10" width="8" height="2" fill="#646977"/><rect x="10" y="10" width="12" height="2" fill="#858b98"/><rect x="22" y="10" width="8" height="2" fill="#646977"/><rect x="0" y="12" width="2" height="2" fill="#646977"/><rect x="2" y="12" width="2" height="2" fill="#363a46"/><rect x="4" y="12" width="2" height="2" fill="#646977"/><rect x="6" y="12" width="2" height="2" fill="#363a46"/><rect x="8" y="12" width="2" height="2" fill="#646977"/><rect x="10" y="12" width="4" height="2" fill="#858b98"/><rect x="14" y="12" width="4" height="2" fill="#c8cdd6"/><rect x="18" y="12" width="4" height="2" fill="#858b98"/><rect x="22" y="12" width="2" height="2" fill="#646977"/><rect x="24" y="12" width="2" height="2" fill="#363a46"/><rect x="26" y="12" width="2" height="2" fill="#646977"/><rect x="28" y="12" width="2" height="2" fill="#363a46"/><rect x="30" y="12" width="2" height="2" fill="#646977"/><rect x="0" y="14" width="10" height="2" fill="#646977"/><rect x="10" y="14" width="2" height="2" fill="#858b98"/><rect x="12" y="14" width="8" height="2" fill="#c8cdd6"/><rect x="20" y="14" width="2" height="2" fill="#858b98"/><rect x="22" y="14" width="10" height="2" fill="#646977"/><rect x="0" y="16" width="10" height="2" fill="#646977"/><rect x="10" y="16" width="2" height="2" fill="#858b98"/><rect x="12" y="16" width="8" height="2" fill="#c8cdd6"/><rect x="20" y="16" width="2" height="2" fill="#858b98"/><rect x="22" y="16" width="10" height="2" fill="#646977"/><rect x="0" y="18" width="2" height="2" fill="#646977"/><rect x="2" y="18" width="2" height="2" fill="#363a46"/><rect x="4" y="18" width="2" height="2" fill="#646977"/><rect x="6" y="18" width="2" height="2" fill="#363a46"/><rect x="8" y="18" width="2" height="2" fill="#646977"/><rect x="10" y="18" width="4" height="2" fill="#858b98"/><rect x="14" y="18" width="4" height="2" fill="#c8cdd6"/><rect x="18" y="18" width="4" height="2" fill="#858b98"/><rect x="22" y="18" width="2" height="2" fill="#646977"/><rect x="24" y="18" width="2" height="2" fill="#363a46"/><rect x="26" y="18" width="2" height="2" fill="#646977"/><rect x="28" y="18" width="2" height="2" fill="#363a46"/><rect x="30" y="18" width="2" height="2" fill="#646977"/><rect x="2" y="20" width="8" height="2" fill="#646977"/><rect x="10" y="20" width="12" height="2" fill="#858b98"/><rect x="22" y="20" width="8" height="2" fill="#646977"/><rect x="10" y="22" width="2" height="2" fill="#858b98"/><rect x="12" y="22" width="2" height="2" fill="#2c303b"/><rect x="14" y="22" width="4" height="2" fill="#858b98"/><rect x="18" y="22" width="2" height="2" fill="#2c303b"/><rect x="20" y="22" width="2" height="2" fill="#858b98"/><rect x="10" y="24" width="12" height="2" fill="#858b98"/><rect x="10" y="26" width="2" height="2" fill="#858b98"/><rect x="12" y="26" width="2" height="2" fill="#2c303b"/><rect x="14" y="26" width="4" height="2" fill="#858b98"/><rect x="18" y="26" width="2" height="2" fill="#2c303b"/><rect x="20" y="26" width="2" height="2" fill="#858b98"/><rect x="10" y="28" width="12" height="2" fill="#858b98"/><rect x="10" y="30" width="2" height="2" fill="#5a5f6b"/><rect x="12" y="30" width="8" height="2" fill="#858b98"/><rect x="20" y="30" width="2" height="2" fill="#5a5f6b"/></svg>
<div class="t" style="left:150.0px;top:430.7px;font-size:25.31px;line-height:25.31px;color:#dcdfe5;font-weight:normal;transform:scaleX(0.8929);transform-origin:left top;">C / Rust</div>
<svg style="left:114.0px;top:472.0px;" width="32" height="32" viewBox="0 0 32 32"><rect x="10" y="0" width="2" height="2" fill="#5a5f6b"/><rect x="12" y="0" width="8" height="2" fill="#858b98"/><rect x="20" y="0" width="2" height="2" fill="#5a5f6b"/><rect x="10" y="2" width="12" height="2" fill="#858b98"/><rect x="10" y="4" width="2" height="2" fill="#858b98"/><rect x="12" y="4" width="2" height="2" fill="#2c303b"/><rect x="14" y="4" width="4" height="2" fill="#858b98"/><rect x="18" y="4" width="2" height="2" fill="#2c303b"/><rect x="20" y="4" width="2" height="2" fill="#858b98"/><rect x="10" y="6" width="12" height="2" fill="#858b98"/><rect x="10" y="8" width="2" height="2" fill="#858b98"/><rect x="12" y="8" width="2" height="2" fill="#2c303b"/><rect x="14" y="8" width="4" height="2" fill="#858b98"/><rect x="18" y="8" width="2" height="2" fill="#2c303b"/><rect x="20" y="8" width="2" height="2" fill="#858b98"/><rect x="2" y="10" width="8" height="2" fill="#646977"/><rect x="10" y="10" width="12" height="2" fill="#858b98"/><rect x="22" y="10" width="8" height="2" fill="#646977"/><rect x="0" y="12" width="2" height="2" fill="#646977"/><rect x="2" y="12" width="2" height="2" fill="#363a46"/><rect x="4" y="12" width="2" height="2" fill="#646977"/><rect x="6" y="12" width="2" height="2" fill="#363a46"/><rect x="8" y="12" width="2" height="2" fill="#646977"/><rect x="10" y="12" width="4" height="2" fill="#858b98"/><rect x="14" y="12" width="4" height="2" fill="#c8cdd6"/><rect x="18" y="12" width="4" height="2" fill="#858b98"/><rect x="22" y="12" width="2" height="2" fill="#646977"/><rect x="24" y="12" width="2" height="2" fill="#363a46"/><rect x="26" y="12" width="2" height="2" fill="#646977"/><rect x="28" y="12" width="2" height="2" fill="#363a46"/><rect x="30" y="12" width="2" height="2" fill="#646977"/><rect x="0" y="14" width="10" height="2" fill="#646977"/><rect x="10" y="14" width="2" height="2" fill="#858b98"/><rect x="12" y="14" width="8" height="2" fill="#c8cdd6"/><rect x="20" y="14" width="2" height="2" fill="#858b98"/><rect x="22" y="14" width="10" height="2" fill="#646977"/><rect x="0" y="16" width="10" height="2" fill="#646977"/><rect x="10" y="16" width="2" height="2" fill="#858b98"/><rect x="12" y="16" width="8" height="2" fill="#c8cdd6"/><rect x="20" y="16" width="2" height="2" fill="#858b98"/><rect x="22" y="16" width="10" height="2" fill="#646977"/><rect x="0" y="18" width="2" height="2" fill="#646977"/><rect x="2" y="18" width="2" height="2" fill="#363a46"/><rect x="4" y="18" width="2" height="2" fill="#646977"/><rect x="6" y="18" width="2" height="2" fill="#363a46"/><rect x="8" y="18" width="2" height="2" fill="#646977"/><rect x="10" y="18" width="4" height="2" fill="#858b98"/><rect x="14" y="18" width="4" height="2" fill="#c8cdd6"/><rect x="18" y="18" width="4" height="2" fill="#858b98"/><rect x="22" y="18" width="2" height="2" fill="#646977"/><rect x="24" y="18" width="2" height="2" fill="#363a46"/><rect x="26" y="18" width="2" height="2" fill="#646977"/><rect x="28" y="18" width="2" height="2" fill="#363a46"/><rect x="30" y="18" width="2" height="2" fill="#646977"/><rect x="2" y="20" width="8" height="2" fill="#646977"/><rect x="10" y="20" width="12" height="2" fill="#858b98"/><rect x="22" y="20" width="8" height="2" fill="#646977"/><rect x="10" y="22" width="2" height="2" fill="#858b98"/><rect x="12" y="22" width="2" height="2" fill="#2c303b"/><rect x="14" y="22" width="4" height="2" fill="#858b98"/><rect x="18" y="22" width="2" height="2" fill="#2c303b"/><rect x="20" y="22" width="2" height="2" fill="#858b98"/><rect x="10" y="24" width="12" height="2" fill="#858b98"/><rect x="10" y="26" width="2" height="2" fill="#858b98"/><rect x="12" y="26" width="2" height="2" fill="#2c303b"/><rect x="14" y="26" width="4" height="2" fill="#858b98"/><rect x="18" y="26" width="2" height="2" fill="#2c303b"/><rect x="20" y="26" width="2" height="2" fill="#858b98"/><rect x="10" y="28" width="12" height="2" fill="#858b98"/><rect x="10" y="30" width="2" height="2" fill="#5a5f6b"/><rect x="12" y="30" width="8" height="2" fill="#858b98"/><rect x="20" y="30" width="2" height="2" fill="#5a5f6b"/></svg>
<div class="t" style="left:150.0px;top:476.7px;font-size:25.31px;line-height:25.31px;color:#dcdfe5;font-weight:normal;transform:scaleX(0.8929);transform-origin:left top;">Symbols</div>
<svg style="left:52.0px;top:523.0px;" width="13" height="24" viewBox="0 0 13 24"><polygon points="0,0 12.5,12 0,24" fill="#8e939e"/></svg>
<svg style="left:78.0px;top:520.0px;" width="32" height="26" viewBox="0 0 32 26"><rect x="0" y="0" width="6" height="2" fill="#c8cdd6"/><rect x="16" y="0" width="6" height="2" fill="#c8cdd6"/><rect x="0" y="2" width="2" height="2" fill="#c8cdd6"/><rect x="2" y="2" width="2" height="2" fill="#363a46"/><rect x="4" y="2" width="2" height="2" fill="#c8cdd6"/><rect x="6" y="2" width="2" height="2" fill="#8e939e"/><rect x="8" y="2" width="6" height="2" fill="#c8cdd6"/><rect x="16" y="2" width="2" height="2" fill="#c8cdd6"/><rect x="18" y="2" width="2" height="2" fill="#363a46"/><rect x="20" y="2" width="2" height="2" fill="#c8cdd6"/><rect x="22" y="2" width="2" height="2" fill="#8e939e"/><rect x="24" y="2" width="6" height="2" fill="#c8cdd6"/><rect x="0" y="4" width="6" height="2" fill="#c8cdd6"/><rect x="16" y="4" width="6" height="2" fill="#c8cdd6"/><rect x="0" y="10" width="6" height="2" fill="#c8cdd6"/><rect x="16" y="10" width="6" height="2" fill="#c8cdd6"/><rect x="0" y="12" width="2" height="2" fill="#c8cdd6"/><rect x="2" y="12" width="2" height="2" fill="#363a46"/><rect x="4" y="12" width="2" height="2" fill="#c8cdd6"/><rect x="6" y="12" width="2" height="2" fill="#8e939e"/><rect x="8" y="12" width="6" height="2" fill="#c8cdd6"/><rect x="16" y="12" width="2" height="2" fill="#c8cdd6"/><rect x="18" y="12" width="2" height="2" fill="#363a46"/><rect x="20" y="12" width="2" height="2" fill="#c8cdd6"/><rect x="22" y="12" width="2" height="2" fill="#8e939e"/><rect x="24" y="12" width="6" height="2" fill="#c8cdd6"/><rect x="0" y="14" width="6" height="2" fill="#c8cdd6"/><rect x="16" y="14" width="6" height="2" fill="#c8cdd6"/><rect x="0" y="20" width="6" height="2" fill="#c8cdd6"/><rect x="16" y="20" width="6" height="2" fill="#c8cdd6"/><rect x="0" y="22" width="2" height="2" fill="#c8cdd6"/><rect x="2" y="22" width="2" height="2" fill="#363a46"/><rect x="4" y="22" width="2" height="2" fill="#c8cdd6"/><rect x="6" y="22" width="2" height="2" fill="#8e939e"/><rect x="8" y="22" width="6" height="2" fill="#c8cdd6"/><rect x="16" y="22" width="2" height="2" fill="#c8cdd6"/><rect x="18" y="22" width="2" height="2" fill="#363a46"/><rect x="20" y="22" width="2" height="2" fill="#c8cdd6"/><rect x="22" y="22" width="2" height="2" fill="#8e939e"/><rect x="24" y="22" width="6" height="2" fill="#c8cdd6"/><rect x="0" y="24" width="6" height="2" fill="#c8cdd6"/><rect x="16" y="24" width="6" height="2" fill="#c8cdd6"/></svg>
<div class="t" style="left:114.7px;top:522.7px;font-size:25.31px;line-height:25.31px;color:#dcdfe5;font-weight:normal;transform:scaleX(0.8929);transform-origin:left top;">Lists</div>
<svg style="left:52.0px;top:569.0px;" width="13" height="24" viewBox="0 0 13 24"><polygon points="0,0 12.5,12 0,24" fill="#8e939e"/></svg>
<svg style="left:80.0px;top:569.5px;" width="28" height="22" viewBox="0 0 28 22"><rect x="4" y="0" width="16" height="2" fill="#c8cdd6"/><rect x="2" y="2" width="2" height="2" fill="#c8cdd6"/><rect x="4" y="2" width="16" height="2" fill="#868c99"/><rect x="20" y="2" width="2" height="2" fill="#c8cdd6"/><rect x="0" y="4" width="2" height="2" fill="#c8cdd6"/><rect x="2" y="4" width="20" height="2" fill="#868c99"/><rect x="22" y="4" width="2" height="2" fill="#c8cdd6"/><rect x="0" y="6" width="26" height="2" fill="#868c99"/><rect x="0" y="8" width="4" height="2" fill="#868c99"/><rect x="4" y="8" width="2" height="2" fill="#363a46"/><rect x="6" y="8" width="4" height="2" fill="#868c99"/><rect x="10" y="8" width="2" height="2" fill="#363a46"/><rect x="12" y="8" width="4" height="2" fill="#868c99"/><rect x="16" y="8" width="2" height="2" fill="#363a46"/><rect x="18" y="8" width="8" height="2" fill="#868c99"/><rect x="0" y="10" width="4" height="2" fill="#868c99"/><rect x="4" y="10" width="2" height="2" fill="#363a46"/><rect x="6" y="10" width="4" height="2" fill="#868c99"/><rect x="10" y="10" width="2" height="2" fill="#363a46"/><rect x="12" y="10" width="4" height="2" fill="#868c99"/><rect x="16" y="10" width="2" height="2" fill="#363a46"/><rect x="18" y="10" width="8" height="2" fill="#868c99"/><rect x="0" y="12" width="26" height="2" fill="#868c99"/><rect x="2" y="14" width="22" height="2" fill="#868c99"/><rect x="4" y="16" width="18" height="2" fill="#868c99"/><rect x="16" y="18" width="2" height="2" fill="#868c99"/><rect x="18" y="18" width="2" height="2" fill="#c8cdd6"/><rect x="20" y="18" width="2" height="2" fill="#868c99"/><rect x="18" y="20" width="2" height="2" fill="#868c99"/></svg>
<div class="t" style="left:114.7px;top:568.7px;font-size:25.31px;line-height:25.31px;color:#dcdfe5;font-weight:normal;transform:scaleX(0.8929);transform-origin:left top;">Text Strings</div>
<svg style="left:52.0px;top:615.0px;" width="13" height="24" viewBox="0 0 13 24"><polygon points="0,0 12.5,12 0,24" fill="#8e939e"/></svg>
<svg style="left:78.0px;top:609.5px;" width="32" height="28" viewBox="0 0 32 28"><rect x="0" y="0" width="32" height="2" fill="#868c99"/><rect x="0" y="2" width="10" height="2" fill="#868c99"/><rect x="22" y="2" width="10" height="2" fill="#868c99"/><rect x="0" y="4" width="2" height="2" fill="#868c99"/><rect x="2" y="4" width="2" height="2" fill="#2c303b"/><rect x="4" y="4" width="4" height="2" fill="#868c99"/><rect x="24" y="4" width="4" height="2" fill="#868c99"/><rect x="28" y="4" width="2" height="2" fill="#2c303b"/><rect x="30" y="4" width="2" height="2" fill="#868c99"/><rect x="0" y="6" width="2" height="2" fill="#868c99"/><rect x="2" y="6" width="2" height="2" fill="#2c303b"/><rect x="4" y="6" width="2" height="2" fill="#868c99"/><rect x="26" y="6" width="2" height="2" fill="#868c99"/><rect x="28" y="6" width="2" height="2" fill="#2c303b"/><rect x="30" y="6" width="2" height="2" fill="#868c99"/><rect x="0" y="8" width="2" height="2" fill="#868c99"/><rect x="2" y="8" width="2" height="2" fill="#2c303b"/><rect x="4" y="8" width="2" height="2" fill="#868c99"/><rect x="26" y="8" width="2" height="2" fill="#868c99"/><rect x="28" y="8" width="2" height="2" fill="#2c303b"/><rect x="30" y="8" width="2" height="2" fill="#868c99"/><rect x="0" y="10" width="6" height="2" fill="#868c99"/><rect x="26" y="10" width="6" height="2" fill="#868c99"/><rect x="0" y="12" width="6" height="2" fill="#868c99"/><rect x="26" y="12" width="6" height="2" fill="#868c99"/><rect x="0" y="14" width="4" height="2" fill="#c8cdd6"/><rect x="4" y="14" width="2" height="2" fill="#868c99"/><rect x="8" y="14" width="16" height="2" fill="#646977"/><rect x="26" y="14" width="2" height="2" fill="#868c99"/><rect x="28" y="14" width="4" height="2" fill="#c8cdd6"/><rect x="0" y="16" width="6" height="2" fill="#868c99"/><rect x="8" y="16" width="16" height="2" fill="#646977"/><rect x="26" y="16" width="6" height="2" fill="#868c99"/><rect x="0" y="18" width="6" height="2" fill="#868c99"/><rect x="10" y="18" width="12" height="2" fill="#868c99"/><rect x="26" y="18" width="6" height="2" fill="#868c99"/><rect x="0" y="20" width="2" height="2" fill="#868c99"/><rect x="2" y="20" width="2" height="2" fill="#2c303b"/><rect x="4" y="20" width="2" height="2" fill="#868c99"/><rect x="6" y="20" width="2" height="2" fill="#2c303b"/><rect x="10" y="20" width="12" height="2" fill="#868c99"/><rect x="24" y="20" width="2" height="2" fill="#2c303b"/><rect x="26" y="20" width="2" height="2" fill="#868c99"/><rect x="28" y="20" width="2" height="2" fill="#2c303b"/><rect x="30" y="20" width="2" height="2" fill="#868c99"/><rect x="0" y="22" width="2" height="2" fill="#868c99"/><rect x="2" y="22" width="2" height="2" fill="#2c303b"/><rect x="4" y="22" width="2" height="2" fill="#868c99"/><rect x="6" y="22" width="2" height="2" fill="#2c303b"/><rect x="10" y="22" width="12" height="2" fill="#868c99"/><rect x="24" y="22" width="2" height="2" fill="#2c303b"/><rect x="26" y="22" width="2" height="2" fill="#868c99"/><rect x="28" y="22" width="2" height="2" fill="#2c303b"/><rect x="30" y="22" width="2" height="2" fill="#868c99"/><rect x="0" y="24" width="2" height="2" fill="#868c99"/><rect x="2" y="24" width="2" height="2" fill="#2c303b"/><rect x="4" y="24" width="2" height="2" fill="#868c99"/><rect x="6" y="24" width="2" height="2" fill="#2c303b"/><rect x="10" y="24" width="12" height="2" fill="#868c99"/><rect x="24" y="24" width="2" height="2" fill="#2c303b"/><rect x="26" y="24" width="2" height="2" fill="#868c99"/><rect x="28" y="24" width="2" height="2" fill="#2c303b"/><rect x="30" y="24" width="2" height="2" fill="#868c99"/><rect x="10" y="26" width="12" height="2" fill="#c8cdd6"/></svg>
<div class="t" style="left:114.7px;top:614.7px;font-size:25.31px;line-height:25.31px;color:#dcdfe5;font-weight:normal;transform:scaleX(0.8929);transform-origin:left top;">Script Scenes</div>
<svg style="left:52.0px;top:661.0px;" width="13" height="24" viewBox="0 0 13 24"><polygon points="0,0 12.5,12 0,24" fill="#8e939e"/></svg>
<svg style="left:78.0px;top:655.4px;" width="32" height="32" viewBox="0 0 32 32"><rect x="8" y="0" width="2" height="2" fill="#868c99"/><rect x="16" y="0" width="2" height="2" fill="#868c99"/><rect x="8" y="2" width="2" height="2" fill="#868c99"/><rect x="14" y="2" width="4" height="2" fill="#868c99"/><rect x="8" y="4" width="6" height="2" fill="#646977"/><rect x="14" y="4" width="4" height="2" fill="#868c99"/><rect x="8" y="6" width="6" height="2" fill="#c8cdd6"/><rect x="14" y="6" width="4" height="2" fill="#868c99"/><rect x="4" y="8" width="6" height="2" fill="#c8cdd6"/><rect x="10" y="8" width="2" height="2" fill="#2c303b"/><rect x="12" y="8" width="2" height="2" fill="#c8cdd6"/><rect x="14" y="8" width="4" height="2" fill="#646977"/><rect x="0" y="10" width="14" height="2" fill="#c8cdd6"/><rect x="14" y="10" width="4" height="2" fill="#868c99"/><rect x="30" y="10" width="2" height="2" fill="#868c99"/><rect x="8" y="12" width="4" height="2" fill="#c8cdd6"/><rect x="12" y="12" width="6" height="2" fill="#646977"/><rect x="28" y="12" width="4" height="2" fill="#868c99"/><rect x="8" y="14" width="10" height="2" fill="#868c99"/><rect x="26" y="14" width="6" height="2" fill="#868c99"/><rect x="6" y="16" width="6" height="2" fill="#868c99"/><rect x="12" y="16" width="6" height="2" fill="#646977"/><rect x="24" y="16" width="4" height="2" fill="#868c99"/><rect x="28" y="16" width="2" height="2" fill="#646977"/><rect x="30" y="16" width="2" height="2" fill="#868c99"/><rect x="6" y="18" width="6" height="2" fill="#868c99"/><rect x="12" y="18" width="8" height="2" fill="#646977"/><rect x="22" y="18" width="8" height="2" fill="#868c99"/><rect x="6" y="20" width="6" height="2" fill="#868c99"/><rect x="12" y="20" width="6" height="2" fill="#646977"/><rect x="20" y="20" width="2" height="2" fill="#646977"/><rect x="22" y="20" width="8" height="2" fill="#868c99"/><rect x="8" y="22" width="6" height="2" fill="#868c99"/><rect x="14" y="22" width="2" height="2" fill="#646977"/><rect x="24" y="22" width="4" height="2" fill="#868c99"/><rect x="10" y="24" width="8" height="2" fill="#868c99"/><rect x="18" y="24" width="8" height="2" fill="#646977"/><rect x="12" y="26" width="12" height="2" fill="#868c99"/><rect x="12" y="28" width="2" height="2" fill="#c8cdd6"/><rect x="18" y="28" width="2" height="2" fill="#c8cdd6"/><rect x="10" y="30" width="4" height="2" fill="#c8cdd6"/><rect x="16" y="30" width="4" height="2" fill="#c8cdd6"/></svg>
<div class="t" style="left:114.7px;top:660.7px;font-size:25.31px;line-height:25.31px;color:#dcdfe5;font-weight:normal;transform:scaleX(0.8929);transform-origin:left top;">Pok&eacute;mon</div>
<svg style="left:52.0px;top:707.0px;" width="13" height="24" viewBox="0 0 13 24"><polygon points="0,0 12.5,12 0,24" fill="#8e939e"/></svg>
<svg style="left:85.0px;top:702.0px;" width="20" height="32" viewBox="0 0 20 32"><rect x="2" y="0" width="2" height="2" fill="#c8cdd6"/><rect x="4" y="0" width="2" height="2" fill="#646977"/><rect x="6" y="0" width="2" height="2" fill="#c8cdd6"/><rect x="8" y="0" width="2" height="2" fill="#646977"/><rect x="10" y="0" width="2" height="2" fill="#c8cdd6"/><rect x="12" y="0" width="2" height="2" fill="#646977"/><rect x="14" y="0" width="2" height="2" fill="#c8cdd6"/><rect x="2" y="2" width="2" height="2" fill="#c8cdd6"/><rect x="4" y="2" width="2" height="2" fill="#646977"/><rect x="6" y="2" width="2" height="2" fill="#c8cdd6"/><rect x="8" y="2" width="2" height="2" fill="#646977"/><rect x="10" y="2" width="2" height="2" fill="#c8cdd6"/><rect x="12" y="2" width="2" height="2" fill="#646977"/><rect x="14" y="2" width="2" height="2" fill="#c8cdd6"/><rect x="4" y="4" width="12" height="2" fill="#646977"/><rect x="2" y="6" width="2" height="2" fill="#c8cdd6"/><rect x="4" y="6" width="2" height="2" fill="#868c99"/><rect x="6" y="6" width="8" height="2" fill="#646977"/><rect x="14" y="6" width="4" height="2" fill="#868c99"/><rect x="2" y="8" width="2" height="2" fill="#c8cdd6"/><rect x="4" y="8" width="12" height="2" fill="#646977"/><rect x="16" y="8" width="2" height="2" fill="#868c99"/><rect x="0" y="10" width="2" height="2" fill="#868c99"/><rect x="2" y="10" width="2" height="2" fill="#c8cdd6"/><rect x="4" y="10" width="12" height="2" fill="#646977"/><rect x="16" y="10" width="4" height="2" fill="#868c99"/><rect x="0" y="12" width="4" height="2" fill="#868c99"/><rect x="4" y="12" width="12" height="2" fill="#646977"/><rect x="16" y="12" width="4" height="2" fill="#868c99"/><rect x="0" y="14" width="2" height="2" fill="#868c99"/><rect x="2" y="14" width="8" height="2" fill="#c8cdd6"/><rect x="10" y="14" width="2" height="2" fill="#646977"/><rect x="12" y="14" width="6" height="2" fill="#c8cdd6"/><rect x="18" y="14" width="2" height="2" fill="#868c99"/><rect x="0" y="16" width="2" height="2" fill="#868c99"/><rect x="2" y="16" width="16" height="2" fill="#c8cdd6"/><rect x="18" y="16" width="2" height="2" fill="#868c99"/><rect x="0" y="18" width="2" height="2" fill="#868c99"/><rect x="2" y="18" width="6" height="2" fill="#c8cdd6"/><rect x="8" y="18" width="2" height="2" fill="#2c303b"/><rect x="10" y="18" width="8" height="2" fill="#c8cdd6"/><rect x="18" y="18" width="2" height="2" fill="#868c99"/><rect x="0" y="20" width="2" height="2" fill="#868c99"/><rect x="2" y="20" width="4" height="2" fill="#c8cdd6"/><rect x="6" y="20" width="6" height="2" fill="#2c303b"/><rect x="12" y="20" width="6" height="2" fill="#c8cdd6"/><rect x="18" y="20" width="2" height="2" fill="#868c99"/><rect x="0" y="22" width="2" height="2" fill="#868c99"/><rect x="2" y="22" width="6" height="2" fill="#c8cdd6"/><rect x="8" y="22" width="2" height="2" fill="#2c303b"/><rect x="10" y="22" width="8" height="2" fill="#c8cdd6"/><rect x="18" y="22" width="2" height="2" fill="#868c99"/><rect x="0" y="24" width="2" height="2" fill="#868c99"/><rect x="2" y="24" width="14" height="2" fill="#c8cdd6"/><rect x="16" y="24" width="2" height="2" fill="#646977"/><rect x="18" y="24" width="2" height="2" fill="#868c99"/><rect x="0" y="26" width="2" height="2" fill="#868c99"/><rect x="2" y="26" width="2" height="2" fill="#c8cdd6"/><rect x="4" y="26" width="14" height="2" fill="#646977"/><rect x="18" y="26" width="2" height="2" fill="#868c99"/><rect x="0" y="28" width="2" height="2" fill="#868c99"/><rect x="2" y="28" width="2" height="2" fill="#c8cdd6"/><rect x="4" y="28" width="14" height="2" fill="#646977"/><rect x="18" y="28" width="2" height="2" fill="#868c99"/><rect x="2" y="30" width="16" height="2" fill="#868c99"/></svg>
<div class="t" style="left:114.7px;top:706.7px;font-size:25.31px;line-height:25.31px;color:#dcdfe5;font-weight:normal;transform:scaleX(0.8929);transform-origin:left top;">Items</div>
<svg style="left:52.0px;top:753.0px;" width="13" height="24" viewBox="0 0 13 24"><polygon points="0,0 12.5,12 0,24" fill="#8e939e"/></svg>
<svg style="left:77.0px;top:750.0px;" width="34" height="28" viewBox="0 0 34 28"><rect x="4" y="0" width="2" height="2" fill="#a3a9b4"/><rect x="16" y="0" width="2" height="2" fill="#646977"/><rect x="26" y="0" width="2" height="2" fill="#a3a9b4"/><rect x="4" y="2" width="4" height="2" fill="#868c99"/><rect x="16" y="2" width="2" height="2" fill="#646977"/><rect x="24" y="2" width="4" height="2" fill="#868c99"/><rect x="6" y="4" width="4" height="2" fill="#868c99"/><rect x="14" y="4" width="2" height="2" fill="#646977"/><rect x="16" y="4" width="2" height="2" fill="#868c99"/><rect x="18" y="4" width="2" height="2" fill="#646977"/><rect x="22" y="4" width="4" height="2" fill="#868c99"/><rect x="8" y="6" width="16" height="2" fill="#868c99"/><rect x="8" y="8" width="2" height="2" fill="#868c99"/><rect x="10" y="8" width="2" height="2" fill="#a3a9b4"/><rect x="12" y="8" width="8" height="2" fill="#868c99"/><rect x="20" y="8" width="2" height="2" fill="#a3a9b4"/><rect x="22" y="8" width="2" height="2" fill="#868c99"/><rect x="6" y="10" width="8" height="2" fill="#868c99"/><rect x="14" y="10" width="4" height="2" fill="#c8cdd6"/><rect x="18" y="10" width="8" height="2" fill="#868c99"/><rect x="0" y="12" width="2" height="2" fill="#646977"/><rect x="2" y="12" width="8" height="2" fill="#a3a9b4"/><rect x="10" y="12" width="12" height="2" fill="#c8cdd6"/><rect x="22" y="12" width="8" height="2" fill="#a3a9b4"/><rect x="30" y="12" width="2" height="2" fill="#646977"/><rect x="6" y="14" width="8" height="2" fill="#868c99"/><rect x="14" y="14" width="4" height="2" fill="#c8cdd6"/><rect x="18" y="14" width="8" height="2" fill="#868c99"/><rect x="26" y="14" width="6" height="2" fill="#a3a9b4"/><rect x="32" y="14" width="2" height="2" fill="#646977"/><rect x="8" y="16" width="2" height="2" fill="#868c99"/><rect x="10" y="16" width="2" height="2" fill="#a3a9b4"/><rect x="12" y="16" width="8" height="2" fill="#868c99"/><rect x="20" y="16" width="2" height="2" fill="#a3a9b4"/><rect x="22" y="16" width="2" height="2" fill="#868c99"/><rect x="8" y="18" width="16" height="2" fill="#868c99"/><rect x="6" y="20" width="4" height="2" fill="#868c99"/><rect x="14" y="20" width="2" height="2" fill="#646977"/><rect x="16" y="20" width="2" height="2" fill="#868c99"/><rect x="18" y="20" width="2" height="2" fill="#646977"/><rect x="22" y="20" width="4" height="2" fill="#868c99"/><rect x="4" y="22" width="4" height="2" fill="#868c99"/><rect x="16" y="22" width="2" height="2" fill="#646977"/><rect x="24" y="22" width="4" height="2" fill="#868c99"/><rect x="2" y="24" width="4" height="2" fill="#646977"/><rect x="16" y="24" width="2" height="2" fill="#646977"/><rect x="26" y="24" width="4" height="2" fill="#868c99"/><rect x="16" y="26" width="2" height="2" fill="#646977"/><rect x="28" y="26" width="2" height="2" fill="#646977"/></svg>
<div class="t" style="left:114.7px;top:752.7px;font-size:25.31px;line-height:25.31px;color:#dcdfe5;font-weight:normal;transform:scaleX(0.8929);transform-origin:left top;">Moves</div>
<svg style="left:52.0px;top:799.0px;" width="13" height="24" viewBox="0 0 13 24"><polygon points="0,0 12.5,12 0,24" fill="#8e939e"/></svg>
<svg style="left:80.0px;top:797.3px;" width="28" height="26" viewBox="0 0 28 26"><rect x="22" y="0" width="4" height="2" fill="#646977"/><rect x="22" y="2" width="4" height="2" fill="#646977"/><rect x="26" y="2" width="2" height="2" fill="#868c99"/><rect x="2" y="4" width="10" height="2" fill="#868c99"/><rect x="22" y="4" width="4" height="2" fill="#646977"/><rect x="26" y="4" width="2" height="2" fill="#868c99"/><rect x="0" y="6" width="28" height="2" fill="#868c99"/><rect x="0" y="8" width="2" height="2" fill="#c8cdd6"/><rect x="2" y="8" width="6" height="2" fill="#868c99"/><rect x="8" y="8" width="2" height="2" fill="#2c303b"/><rect x="10" y="8" width="18" height="2" fill="#868c99"/><rect x="0" y="10" width="6" height="2" fill="#c8cdd6"/><rect x="6" y="10" width="6" height="2" fill="#868c99"/><rect x="12" y="10" width="2" height="2" fill="#2c303b"/><rect x="14" y="10" width="4" height="2" fill="#868c99"/><rect x="18" y="10" width="2" height="2" fill="#2c303b"/><rect x="20" y="10" width="2" height="2" fill="#868c99"/><rect x="22" y="10" width="2" height="2" fill="#2c303b"/><rect x="24" y="10" width="4" height="2" fill="#868c99"/><rect x="0" y="12" width="6" height="2" fill="#c8cdd6"/><rect x="6" y="12" width="14" height="2" fill="#868c99"/><rect x="20" y="12" width="2" height="2" fill="#2c303b"/><rect x="22" y="12" width="6" height="2" fill="#868c99"/><rect x="0" y="14" width="6" height="2" fill="#c8cdd6"/><rect x="6" y="14" width="6" height="2" fill="#868c99"/><rect x="12" y="14" width="2" height="2" fill="#2c303b"/><rect x="14" y="14" width="4" height="2" fill="#868c99"/><rect x="18" y="14" width="2" height="2" fill="#2c303b"/><rect x="20" y="14" width="2" height="2" fill="#868c99"/><rect x="22" y="14" width="2" height="2" fill="#2c303b"/><rect x="24" y="14" width="4" height="2" fill="#868c99"/><rect x="0" y="16" width="6" height="2" fill="#c8cdd6"/><rect x="6" y="16" width="22" height="2" fill="#868c99"/><rect x="0" y="18" width="6" height="2" fill="#c8cdd6"/><rect x="6" y="18" width="8" height="2" fill="#868c99"/><rect x="14" y="18" width="2" height="2" fill="#2c303b"/><rect x="16" y="18" width="6" height="2" fill="#868c99"/><rect x="22" y="18" width="2" height="2" fill="#2c303b"/><rect x="24" y="18" width="4" height="2" fill="#868c99"/><rect x="0" y="20" width="6" height="2" fill="#c8cdd6"/><rect x="6" y="20" width="12" height="2" fill="#868c99"/><rect x="18" y="20" width="2" height="2" fill="#2c303b"/><rect x="20" y="20" width="8" height="2" fill="#868c99"/><rect x="0" y="22" width="6" height="2" fill="#c8cdd6"/><rect x="12" y="22" width="14" height="2" fill="#868c99"/><rect x="2" y="24" width="4" height="2" fill="#c8cdd6"/></svg>
<div class="t" style="left:114.7px;top:798.7px;font-size:25.31px;line-height:25.31px;color:#dcdfe5;font-weight:normal;transform:scaleX(0.8929);transform-origin:left top;">Map Backgrounds</div>
<svg style="left:52.0px;top:845.0px;" width="13" height="24" viewBox="0 0 13 24"><polygon points="0,0 12.5,12 0,24" fill="#8e939e"/></svg>
<svg style="left:80.0px;top:841.2px;" width="28" height="28" viewBox="0 0 28 28"><rect x="8" y="0" width="20" height="2" fill="#868c99"/><rect x="6" y="2" width="20" height="2" fill="#868c99"/><rect x="26" y="2" width="2" height="2" fill="#646977"/><rect x="4" y="4" width="20" height="2" fill="#868c99"/><rect x="24" y="4" width="4" height="2" fill="#646977"/><rect x="2" y="6" width="20" height="2" fill="#868c99"/><rect x="22" y="6" width="6" height="2" fill="#646977"/><rect x="0" y="8" width="20" height="2" fill="#868c99"/><rect x="20" y="8" width="8" height="2" fill="#646977"/><rect x="0" y="10" width="18" height="2" fill="#c8cdd6"/><rect x="18" y="10" width="10" height="2" fill="#646977"/><rect x="0" y="12" width="18" height="2" fill="#c8cdd6"/><rect x="18" y="12" width="10" height="2" fill="#646977"/><rect x="0" y="14" width="18" height="2" fill="#c8cdd6"/><rect x="18" y="14" width="10" height="2" fill="#646977"/><rect x="0" y="16" width="18" height="2" fill="#c8cdd6"/><rect x="18" y="16" width="10" height="2" fill="#646977"/><rect x="0" y="18" width="18" height="2" fill="#c8cdd6"/><rect x="18" y="18" width="10" height="2" fill="#646977"/><rect x="0" y="20" width="18" height="2" fill="#c8cdd6"/><rect x="18" y="20" width="8" height="2" fill="#646977"/><rect x="0" y="22" width="18" height="2" fill="#c8cdd6"/><rect x="18" y="22" width="6" height="2" fill="#646977"/><rect x="0" y="24" width="18" height="2" fill="#c8cdd6"/><rect x="18" y="24" width="4" height="2" fill="#646977"/><rect x="0" y="26" width="18" height="2" fill="#c8cdd6"/><rect x="18" y="26" width="2" height="2" fill="#646977"/></svg>
<div class="t" style="left:114.7px;top:844.7px;font-size:25.31px;line-height:25.31px;color:#dcdfe5;font-weight:normal;transform:scaleX(0.8929);transform-origin:left top;">Object Sprites</div>
<svg style="left:52.0px;top:891.0px;" width="13" height="24" viewBox="0 0 13 24"><polygon points="0,0 12.5,12 0,24" fill="#8e939e"/></svg>
<svg style="left:78.0px;top:885.2px;" width="32" height="32" viewBox="0 0 32 32"><rect x="2" y="0" width="28" height="2" fill="#c8cdd6"/><rect x="0" y="2" width="2" height="2" fill="#c8cdd6"/><rect x="2" y="2" width="28" height="2" fill="#363a46"/><rect x="30" y="2" width="2" height="2" fill="#c8cdd6"/><rect x="0" y="4" width="2" height="2" fill="#c8cdd6"/><rect x="2" y="4" width="28" height="2" fill="#363a46"/><rect x="30" y="4" width="2" height="2" fill="#c8cdd6"/><rect x="0" y="6" width="2" height="2" fill="#c8cdd6"/><rect x="2" y="6" width="10" height="2" fill="#363a46"/><rect x="12" y="6" width="8" height="2" fill="#646977"/><rect x="20" y="6" width="10" height="2" fill="#363a46"/><rect x="30" y="6" width="2" height="2" fill="#c8cdd6"/><rect x="0" y="8" width="2" height="2" fill="#c8cdd6"/><rect x="2" y="8" width="6" height="2" fill="#363a46"/><rect x="8" y="8" width="14" height="2" fill="#646977"/><rect x="22" y="8" width="6" height="2" fill="#868c99"/><rect x="28" y="8" width="2" height="2" fill="#363a46"/><rect x="30" y="8" width="2" height="2" fill="#c8cdd6"/><rect x="0" y="10" width="2" height="2" fill="#c8cdd6"/><rect x="2" y="10" width="10" height="2" fill="#868c99"/><rect x="12" y="10" width="8" height="2" fill="#646977"/><rect x="20" y="10" width="8" height="2" fill="#868c99"/><rect x="28" y="10" width="2" height="2" fill="#646977"/><rect x="30" y="10" width="2" height="2" fill="#c8cdd6"/><rect x="0" y="12" width="2" height="2" fill="#c8cdd6"/><rect x="2" y="12" width="12" height="2" fill="#646977"/><rect x="14" y="12" width="4" height="2" fill="#868c99"/><rect x="18" y="12" width="12" height="2" fill="#646977"/><rect x="30" y="12" width="2" height="2" fill="#c8cdd6"/><rect x="0" y="14" width="2" height="2" fill="#c8cdd6"/><rect x="2" y="14" width="10" height="2" fill="#646977"/><rect x="12" y="14" width="10" height="2" fill="#c8cdd6"/><rect x="22" y="14" width="8" height="2" fill="#646977"/><rect x="30" y="14" width="2" height="2" fill="#c8cdd6"/><rect x="0" y="16" width="2" height="2" fill="#c8cdd6"/><rect x="2" y="16" width="8" height="2" fill="#868c99"/><rect x="10" y="16" width="14" height="2" fill="#c8cdd6"/><rect x="24" y="16" width="6" height="2" fill="#868c99"/><rect x="30" y="16" width="2" height="2" fill="#c8cdd6"/><rect x="0" y="18" width="2" height="2" fill="#c8cdd6"/><rect x="2" y="18" width="10" height="2" fill="#646977"/><rect x="12" y="18" width="10" height="2" fill="#c8cdd6"/><rect x="22" y="18" width="8" height="2" fill="#646977"/><rect x="30" y="18" width="2" height="2" fill="#c8cdd6"/><rect x="0" y="20" width="2" height="2" fill="#c8cdd6"/><rect x="2" y="20" width="28" height="2" fill="#646977"/><rect x="30" y="20" width="2" height="2" fill="#c8cdd6"/><rect x="0" y="22" width="2" height="2" fill="#c8cdd6"/><rect x="2" y="22" width="6" height="2" fill="#363a46"/><rect x="8" y="22" width="4" height="2" fill="#646977"/><rect x="12" y="22" width="8" height="2" fill="#363a46"/><rect x="20" y="22" width="6" height="2" fill="#646977"/><rect x="26" y="22" width="4" height="2" fill="#363a46"/><rect x="30" y="22" width="2" height="2" fill="#c8cdd6"/><rect x="0" y="24" width="2" height="2" fill="#c8cdd6"/><rect x="2" y="24" width="12" height="2" fill="#646977"/><rect x="14" y="24" width="4" height="2" fill="#868c99"/><rect x="18" y="24" width="12" height="2" fill="#646977"/><rect x="30" y="24" width="2" height="2" fill="#c8cdd6"/><rect x="0" y="26" width="2" height="2" fill="#c8cdd6"/><rect x="2" y="26" width="4" height="2" fill="#646977"/><rect x="6" y="26" width="4" height="2" fill="#363a46"/><rect x="10" y="26" width="12" height="2" fill="#646977"/><rect x="22" y="26" width="4" height="2" fill="#363a46"/><rect x="26" y="26" width="4" height="2" fill="#646977"/><rect x="30" y="26" width="2" height="2" fill="#c8cdd6"/><rect x="0" y="28" width="2" height="2" fill="#c8cdd6"/><rect x="2" y="28" width="28" height="2" fill="#646977"/><rect x="30" y="28" width="2" height="2" fill="#c8cdd6"/><rect x="2" y="30" width="28" height="2" fill="#c8cdd6"/></svg>
<div class="t" style="left:114.7px;top:890.7px;font-size:25.31px;line-height:25.31px;color:#dcdfe5;font-weight:normal;transform:scaleX(0.8929);transform-origin:left top;">Backgrounds</div>
<svg style="left:52.0px;top:937.0px;" width="13" height="24" viewBox="0 0 13 24"><polygon points="0,0 12.5,12 0,24" fill="#8e939e"/></svg>
<svg style="left:78.0px;top:931.1px;" width="32" height="32" viewBox="0 0 32 32"><rect x="0" y="0" width="4" height="2" fill="#868c99"/><rect x="6" y="0" width="10" height="2" fill="#868c99"/><rect x="18" y="0" width="10" height="2" fill="#868c99"/><rect x="30" y="0" width="2" height="2" fill="#868c99"/><rect x="0" y="2" width="4" height="2" fill="#868c99"/><rect x="6" y="2" width="10" height="2" fill="#868c99"/><rect x="18" y="2" width="10" height="2" fill="#868c99"/><rect x="30" y="2" width="2" height="2" fill="#868c99"/><rect x="0" y="4" width="4" height="2" fill="#c8cdd6"/><rect x="6" y="4" width="10" height="2" fill="#c8cdd6"/><rect x="18" y="4" width="10" height="2" fill="#c8cdd6"/><rect x="30" y="4" width="2" height="2" fill="#c8cdd6"/><rect x="0" y="6" width="12" height="2" fill="#646977"/><rect x="20" y="6" width="12" height="2" fill="#646977"/><rect x="0" y="8" width="8" height="2" fill="#868c99"/><rect x="24" y="8" width="8" height="2" fill="#868c99"/><rect x="0" y="10" width="8" height="2" fill="#868c99"/><rect x="24" y="10" width="8" height="2" fill="#868c99"/><rect x="0" y="12" width="8" height="2" fill="#c8cdd6"/><rect x="24" y="12" width="8" height="2" fill="#c8cdd6"/><rect x="0" y="14" width="8" height="2" fill="#646977"/><rect x="24" y="14" width="8" height="2" fill="#646977"/><rect x="0" y="16" width="4" height="2" fill="#868c99"/><rect x="6" y="16" width="2" height="2" fill="#868c99"/><rect x="24" y="16" width="4" height="2" fill="#868c99"/><rect x="30" y="16" width="2" height="2" fill="#868c99"/><rect x="0" y="18" width="4" height="2" fill="#868c99"/><rect x="6" y="18" width="2" height="2" fill="#868c99"/><rect x="24" y="18" width="4" height="2" fill="#868c99"/><rect x="30" y="18" width="2" height="2" fill="#868c99"/><rect x="6" y="20" width="2" height="2" fill="#c8cdd6"/><rect x="24" y="20" width="4" height="2" fill="#c8cdd6"/><rect x="30" y="20" width="2" height="2" fill="#c8cdd6"/><rect x="4" y="22" width="4" height="2" fill="#646977"/><rect x="24" y="22" width="8" height="2" fill="#646977"/><rect x="0" y="24" width="2" height="2" fill="#868c99"/><rect x="4" y="24" width="4" height="2" fill="#868c99"/><rect x="24" y="24" width="8" height="2" fill="#868c99"/><rect x="6" y="26" width="2" height="2" fill="#868c99"/><rect x="24" y="26" width="8" height="2" fill="#868c99"/><rect x="6" y="28" width="2" height="2" fill="#c8cdd6"/><rect x="24" y="28" width="8" height="2" fill="#c8cdd6"/><rect x="6" y="30" width="2" height="2" fill="#646977"/><rect x="24" y="30" width="8" height="2" fill="#646977"/></svg>
<div class="t" style="left:114.7px;top:936.7px;font-size:25.31px;line-height:25.31px;color:#dcdfe5;font-weight:normal;transform:scaleX(0.8929);transform-origin:left top;">Dungeons</div>
<svg style="left:52.0px;top:983.0px;" width="13" height="24" viewBox="0 0 13 24"><polygon points="0,0 12.5,12 0,24" fill="#8e939e"/></svg>
<svg style="left:78.0px;top:977.0px;" width="32" height="32" viewBox="0 0 32 32"><rect x="2" y="0" width="2" height="2" fill="#c8cdd6"/><rect x="12" y="0" width="2" height="2" fill="#c8cdd6"/><rect x="24" y="0" width="4" height="2" fill="#c8cdd6"/><rect x="0" y="2" width="6" height="2" fill="#c8cdd6"/><rect x="10" y="2" width="6" height="2" fill="#c8cdd6"/><rect x="20" y="2" width="4" height="2" fill="#c8cdd6"/><rect x="28" y="2" width="4" height="2" fill="#c8cdd6"/><rect x="0" y="4" width="2" height="2" fill="#c8cdd6"/><rect x="4" y="4" width="8" height="2" fill="#c8cdd6"/><rect x="14" y="4" width="2" height="2" fill="#c8cdd6"/><rect x="20" y="4" width="2" height="2" fill="#c8cdd6"/><rect x="30" y="4" width="2" height="2" fill="#c8cdd6"/><rect x="0" y="6" width="2" height="2" fill="#c8cdd6"/><rect x="14" y="6" width="2" height="2" fill="#c8cdd6"/><rect x="22" y="6" width="2" height="2" fill="#c8cdd6"/><rect x="28" y="6" width="2" height="2" fill="#c8cdd6"/><rect x="0" y="8" width="2" height="2" fill="#c8cdd6"/><rect x="4" y="8" width="2" height="2" fill="#646977"/><rect x="10" y="8" width="2" height="2" fill="#646977"/><rect x="14" y="8" width="2" height="2" fill="#c8cdd6"/><rect x="20" y="8" width="2" height="2" fill="#c8cdd6"/><rect x="24" y="8" width="4" height="2" fill="#c8cdd6"/><rect x="0" y="10" width="2" height="2" fill="#c8cdd6"/><rect x="14" y="10" width="2" height="2" fill="#c8cdd6"/><rect x="18" y="10" width="2" height="2" fill="#c8cdd6"/><rect x="0" y="12" width="4" height="2" fill="#c8cdd6"/><rect x="12" y="12" width="4" height="2" fill="#c8cdd6"/><rect x="16" y="12" width="2" height="2" fill="#646977"/><rect x="0" y="14" width="2" height="2" fill="#c8cdd6"/><rect x="4" y="14" width="10" height="2" fill="#c8cdd6"/><rect x="16" y="14" width="2" height="2" fill="#c8cdd6"/><rect x="0" y="16" width="2" height="2" fill="#c8cdd6"/><rect x="14" y="16" width="2" height="2" fill="#c8cdd6"/><rect x="0" y="18" width="4" height="2" fill="#c8cdd6"/><rect x="12" y="18" width="4" height="2" fill="#c8cdd6"/><rect x="0" y="20" width="16" height="2" fill="#c8cdd6"/><rect x="0" y="22" width="16" height="2" fill="#c8cdd6"/><rect x="0" y="24" width="22" height="2" fill="#c8cdd6"/><rect x="22" y="24" width="10" height="2" fill="#868c99"/><rect x="0" y="26" width="22" height="2" fill="#c8cdd6"/><rect x="22" y="26" width="10" height="2" fill="#868c99"/><rect x="0" y="28" width="22" height="2" fill="#c8cdd6"/><rect x="22" y="28" width="10" height="2" fill="#868c99"/><rect x="0" y="30" width="22" height="2" fill="#c8cdd6"/><rect x="22" y="30" width="10" height="2" fill="#868c99"/></svg>
<div class="t" style="left:114.7px;top:982.7px;font-size:25.31px;line-height:25.31px;color:#dcdfe5;font-weight:normal;transform:scaleX(0.8929);transform-origin:left top;">Fixed Rooms</div>
<svg style="left:52.0px;top:1029.0px;" width="13" height="24" viewBox="0 0 13 24"><polygon points="0,0 12.5,12 0,24" fill="#8e939e"/></svg>
<svg style="left:78.0px;top:1023.0px;" width="32" height="32" viewBox="0 0 32 32"><rect x="4" y="0" width="10" height="2" fill="#c8cdd6"/><rect x="16" y="0" width="2" height="2" fill="#c8cdd6"/><rect x="18" y="0" width="12" height="2" fill="#646977"/><rect x="0" y="2" width="2" height="2" fill="#c8cdd6"/><rect x="2" y="2" width="12" height="2" fill="#646977"/><rect x="14" y="2" width="2" height="2" fill="#c8cdd6"/><rect x="16" y="2" width="16" height="2" fill="#646977"/><rect x="0" y="4" width="2" height="2" fill="#c8cdd6"/><rect x="2" y="4" width="12" height="2" fill="#646977"/><rect x="14" y="4" width="2" height="2" fill="#c8cdd6"/><rect x="16" y="4" width="8" height="2" fill="#646977"/><rect x="24" y="4" width="2" height="2" fill="#a3a9b4"/><rect x="26" y="4" width="6" height="2" fill="#646977"/><rect x="0" y="6" width="2" height="2" fill="#c8cdd6"/><rect x="2" y="6" width="4" height="2" fill="#646977"/><rect x="6" y="6" width="2" height="2" fill="#a3a9b4"/><rect x="8" y="6" width="6" height="2" fill="#646977"/><rect x="14" y="6" width="2" height="2" fill="#c8cdd6"/><rect x="16" y="6" width="6" height="2" fill="#646977"/><rect x="22" y="6" width="2" height="2" fill="#a3a9b4"/><rect x="24" y="6" width="2" height="2" fill="#c8cdd6"/><rect x="26" y="6" width="2" height="2" fill="#a3a9b4"/><rect x="28" y="6" width="4" height="2" fill="#646977"/><rect x="0" y="8" width="2" height="2" fill="#c8cdd6"/><rect x="2" y="8" width="12" height="2" fill="#646977"/><rect x="14" y="8" width="2" height="2" fill="#c8cdd6"/><rect x="16" y="8" width="8" height="2" fill="#646977"/><rect x="24" y="8" width="2" height="2" fill="#a3a9b4"/><rect x="26" y="8" width="6" height="2" fill="#646977"/><rect x="0" y="10" width="2" height="2" fill="#c8cdd6"/><rect x="2" y="10" width="10" height="2" fill="#646977"/><rect x="12" y="10" width="2" height="2" fill="#c8cdd6"/><rect x="14" y="10" width="8" height="2" fill="#646977"/><rect x="22" y="10" width="2" height="2" fill="#a3a9b4"/><rect x="24" y="10" width="8" height="2" fill="#646977"/><rect x="0" y="12" width="2" height="2" fill="#c8cdd6"/><rect x="2" y="12" width="12" height="2" fill="#646977"/><rect x="14" y="12" width="2" height="2" fill="#c8cdd6"/><rect x="16" y="12" width="4" height="2" fill="#646977"/><rect x="20" y="12" width="2" height="2" fill="#a3a9b4"/><rect x="22" y="12" width="6" height="2" fill="#646977"/><rect x="28" y="12" width="2" height="2" fill="#a3a9b4"/><rect x="30" y="12" width="2" height="2" fill="#646977"/><rect x="2" y="14" width="14" height="2" fill="#c8cdd6"/><rect x="16" y="14" width="16" height="2" fill="#646977"/><rect x="0" y="16" width="18" height="2" fill="#646977"/><rect x="18" y="16" width="12" height="2" fill="#c8cdd6"/><rect x="30" y="16" width="2" height="2" fill="#646977"/><rect x="0" y="18" width="4" height="2" fill="#646977"/><rect x="4" y="18" width="2" height="2" fill="#a3a9b4"/><rect x="6" y="18" width="6" height="2" fill="#646977"/><rect x="12" y="18" width="2" height="2" fill="#a3a9b4"/><rect x="14" y="18" width="2" height="2" fill="#646977"/><rect x="16" y="18" width="2" height="2" fill="#c8cdd6"/><rect x="18" y="18" width="12" height="2" fill="#868c99"/><rect x="30" y="18" width="2" height="2" fill="#c8cdd6"/><rect x="0" y="20" width="8" height="2" fill="#646977"/><rect x="8" y="20" width="2" height="2" fill="#a3a9b4"/><rect x="10" y="20" width="6" height="2" fill="#646977"/><rect x="16" y="20" width="2" height="2" fill="#c8cdd6"/><rect x="18" y="20" width="12" height="2" fill="#868c99"/><rect x="30" y="20" width="2" height="2" fill="#c8cdd6"/><rect x="0" y="22" width="16" height="2" fill="#646977"/><rect x="16" y="22" width="2" height="2" fill="#c8cdd6"/><rect x="18" y="22" width="12" height="2" fill="#868c99"/><rect x="30" y="22" width="2" height="2" fill="#c8cdd6"/><rect x="0" y="24" width="4" height="2" fill="#646977"/><rect x="4" y="24" width="2" height="2" fill="#a3a9b4"/><rect x="6" y="24" width="4" height="2" fill="#646977"/><rect x="10" y="24" width="2" height="2" fill="#a3a9b4"/><rect x="12" y="24" width="4" height="2" fill="#646977"/><rect x="16" y="24" width="2" height="2" fill="#c8cdd6"/><rect x="18" y="24" width="12" height="2" fill="#868c99"/><rect x="30" y="24" width="2" height="2" fill="#c8cdd6"/><rect x="0" y="26" width="2" height="2" fill="#646977"/><rect x="2" y="26" width="2" height="2" fill="#a3a9b4"/><rect x="4" y="26" width="4" height="2" fill="#646977"/><rect x="8" y="26" width="2" height="2" fill="#a3a9b4"/><rect x="10" y="26" width="6" height="2" fill="#646977"/><rect x="16" y="26" width="2" height="2" fill="#c8cdd6"/><rect x="18" y="26" width="12" height="2" fill="#868c99"/><rect x="30" y="26" width="2" height="2" fill="#c8cdd6"/><rect x="0" y="28" width="12" height="2" fill="#646977"/><rect x="12" y="28" width="2" height="2" fill="#a3a9b4"/><rect x="14" y="28" width="2" height="2" fill="#646977"/><rect x="16" y="28" width="2" height="2" fill="#c8cdd6"/><rect x="18" y="28" width="12" height="2" fill="#868c99"/><rect x="30" y="28" width="2" height="2" fill="#c8cdd6"/><rect x="2" y="30" width="16" height="2" fill="#646977"/><rect x="18" y="30" width="12" height="2" fill="#c8cdd6"/></svg>
<div class="t" style="left:114.7px;top:1028.7px;font-size:25.31px;line-height:25.31px;color:#dcdfe5;font-weight:normal;transform:scaleX(0.8929);transform-origin:left top;">Dungeon Graphics</div>
<svg style="left:52.0px;top:1075.0px;" width="13" height="24" viewBox="0 0 13 24"><polygon points="0,0 12.5,12 0,24" fill="#8e939e"/></svg>
<svg style="left:78.0px;top:1075.0px;" width="32" height="18" viewBox="0 0 32 18"><rect x="12" y="0" width="8" height="2" fill="#c8cdd6"/><rect x="14" y="2" width="4" height="2" fill="#646977"/><rect x="10" y="4" width="12" height="2" fill="#c8cdd6"/><rect x="0" y="6" width="4" height="2" fill="#c8cdd6"/><rect x="8" y="6" width="4" height="2" fill="#c8cdd6"/><rect x="12" y="6" width="8" height="2" fill="#646977"/><rect x="20" y="6" width="4" height="2" fill="#c8cdd6"/><rect x="28" y="6" width="4" height="2" fill="#c8cdd6"/><rect x="0" y="8" width="6" height="2" fill="#c8cdd6"/><rect x="8" y="8" width="2" height="2" fill="#c8cdd6"/><rect x="10" y="8" width="12" height="2" fill="#646977"/><rect x="22" y="8" width="2" height="2" fill="#c8cdd6"/><rect x="26" y="8" width="6" height="2" fill="#c8cdd6"/><rect x="2" y="10" width="2" height="2" fill="#c8cdd6"/><rect x="4" y="10" width="24" height="2" fill="#646977"/><rect x="28" y="10" width="2" height="2" fill="#c8cdd6"/><rect x="0" y="12" width="4" height="2" fill="#c8cdd6"/><rect x="6" y="12" width="2" height="2" fill="#868c99"/><rect x="8" y="12" width="4" height="2" fill="#c8cdd6"/><rect x="12" y="12" width="8" height="2" fill="#646977"/><rect x="20" y="12" width="4" height="2" fill="#c8cdd6"/><rect x="24" y="12" width="2" height="2" fill="#868c99"/><rect x="28" y="12" width="4" height="2" fill="#c8cdd6"/><rect x="4" y="14" width="4" height="2" fill="#868c99"/><rect x="8" y="14" width="4" height="2" fill="#c8cdd6"/><rect x="12" y="14" width="8" height="2" fill="#646977"/><rect x="20" y="14" width="4" height="2" fill="#c8cdd6"/><rect x="24" y="14" width="4" height="2" fill="#868c99"/><rect x="10" y="16" width="12" height="2" fill="#c8cdd6"/></svg>
<div class="t" style="left:114.7px;top:1074.7px;font-size:25.31px;line-height:25.31px;color:#dcdfe5;font-weight:normal;transform:scaleX(0.8929);transform-origin:left top;">Misc. Graphics</div>
<svg style="left:84.0px;top:1116.9px;" width="18" height="26" viewBox="0 0 18 26"><rect x="6" y="0" width="4" height="2" fill="#c8cdd6"/><rect x="4" y="2" width="2" height="2" fill="#c8cdd6"/><rect x="6" y="2" width="4" height="2" fill="#868c99"/><rect x="2" y="4" width="2" height="2" fill="#c8cdd6"/><rect x="4" y="4" width="2" height="2" fill="#868c99"/><rect x="8" y="4" width="2" height="2" fill="#868c99"/><rect x="0" y="6" width="2" height="2" fill="#c8cdd6"/><rect x="2" y="6" width="2" height="2" fill="#868c99"/><rect x="8" y="6" width="2" height="2" fill="#868c99"/><rect x="0" y="8" width="2" height="2" fill="#868c99"/><rect x="8" y="8" width="2" height="2" fill="#868c99"/><rect x="0" y="10" width="2" height="2" fill="#868c99"/><rect x="8" y="10" width="2" height="2" fill="#868c99"/><rect x="8" y="12" width="2" height="2" fill="#868c99"/><rect x="8" y="14" width="2" height="2" fill="#868c99"/><rect x="8" y="16" width="2" height="2" fill="#868c99"/><rect x="10" y="16" width="6" height="2" fill="#c8cdd6"/><rect x="8" y="18" width="8" height="2" fill="#868c99"/><rect x="16" y="18" width="2" height="2" fill="#c8cdd6"/><rect x="8" y="20" width="10" height="2" fill="#868c99"/><rect x="8" y="22" width="10" height="2" fill="#868c99"/><rect x="10" y="24" width="6" height="2" fill="#868c99"/></svg>
<div class="t" style="left:114.7px;top:1120.7px;font-size:25.31px;line-height:25.31px;color:#dcdfe5;font-weight:normal;transform:scaleX(0.8929);transform-origin:left top;">Music</div>
<div class="r" style="left:452.0px;top:86.0px;width:3123.0px;height:1846.0px;background:#373a4a;"></div>
<svg style="left:452.0px;top:560.0px;overflow:hidden;" width="269" height="1372" viewBox="0 0 269 1372"><g transform="translate(-12,0) scale(0.985)">
<rect x="0" y="0" width="300" height="1400" fill="#383b48"/>
<path d="M0 200 L90 200 L175 80 L300 75 L300 280 L0 280 Z" fill="#343641"/>
<path d="M0 215 L300 215 L300 280 L0 280 Z" fill="#363a4b"/>
<path d="M138 215 L195 130 L300 128 L300 215 Z" fill="#4a3c4f"/>
<path d="M0 275 L300 268 L300 348 L0 356 Z" fill="#363f59"/>
<path d="M0 356 L300 345 L300 407 L0 416 Z" fill="#3b3b58"/>
<path d="M0 416 L300 405 L300 922 L0 910 Z" fill="#4c4f5d"/>
<path d="M0 908 L300 925 L300 992 L0 977 Z" fill="#3b3b58"/>
<path d="M0 977 L300 992 L300 1238 L0 1232 Z" fill="#353f58"/>
<path d="M0 1090 L30 1100 L45 1150 L35 1200 L0 1210 Z" fill="#43394f"/>
<path d="M0 1232 L95 1178 L300 1240 L300 1295 L100 1218 L0 1275 Z" fill="#3a3a56"/>
<path d="M0 1275 L100 1218 L300 1295 L300 1400 L0 1400 Z" fill="#4c4f5d"/>
<path d="M10 1400 L25 1300 L300 1395 L300 1400 Z" fill="#433e5e"/>
<path d="M250 1400 L300 1350 L300 1400 Z" fill="#34363f"/>
</g></svg>
<svg style="left:452.0px;top:950.0px;overflow:hidden;" width="268" height="450" viewBox="0 0 268 450"><g fill="#383852">
<path d="M0 194 L91 113 L94 134 L10 214 L0 218Z" stroke="#383852" stroke-width="14" stroke-linejoin="round"/>
<path d="M36 239 L132 136" stroke="#383852" stroke-width="26" stroke-linecap="round"/>
<path d="M78 265 L175 158" stroke="#383852" stroke-width="26" stroke-linecap="round"/>
<path d="M101 291 L192 200" stroke="#383852" stroke-width="22" stroke-linecap="round"/>
<path d="M0 226 L33 223 L72 246 L95 272 L117 297 L85 327 L33 362 L0 372Z"/>
<path d="M0 129 L17 136 L19 145 L0 168Z"/>
<ellipse cx="211" cy="309" rx="62" ry="38" transform="rotate(-40 211 309)"/>
<path d="M253 255 L268 252 L268 301 L240 323Z"/>
</g>
<ellipse cx="18" cy="302" rx="28" ry="30" fill="#4c4f5d"/></svg>
<div class="t" style="left:1970.0px;top:329.1px;font-size:37.52px;line-height:37.52px;color:#dde0e6;font-weight:normal;transform:scaleX(0.8929);transform-origin:left top;">Special Process Effects</div>
<div class="t" style="left:1146.5px;width:2000px;text-align:center;top:385.6px;font-size:25.76px;line-height:25.76px;color:#d2d5dc;font-weight:normal;transform:scaleX(0.8929);transform-origin:center top;">Edits the effects used by each special process.</div>
<div class="t" style="left:1146.5px;width:2000px;text-align:center;top:418.9px;font-size:25.76px;line-height:25.76px;color:#d2d5dc;font-weight:normal;transform:scaleX(0.8929);transform-origin:center top;">This does not list effects added by C or Rust code.</div>
<div class="r" style="left:720.0px;top:530.0px;width:2853.0px;height:1402.0px;background:#3e424f;border-top:2px solid #2b2e38;border-left:2px solid #2b2e38;border-right:2px solid #2b2e38;"></div>
<div class="r" style="left:999.0px;top:482.0px;width:172.0px;height:50.0px;background:#3e424f;border:2px solid #2b2e38;border-bottom:none;border-radius:3px 3px 0 0;"></div>
<div class="t" style="left:742.7px;top:495.3px;font-size:24.98px;line-height:24.98px;color:#8a8e99;font-weight:normal;transform:scaleX(0.8929);transform-origin:left top;">Special Process Effects</div>
<div class="t" style="left:1021.0px;top:495.0px;font-size:25.31px;line-height:25.31px;color:#dde0e6;font-weight:normal;transform:scaleX(0.8929);transform-origin:left top;">Effects Code</div>
<div class="t" style="left:732.8px;top:545.8px;font-size:26.43px;line-height:26.43px;color:#d8dbe1;font-weight:normal;transform:scaleX(0.8929);transform-origin:left top;">This section allows you to insert custom ASM code for effects.</div>
<div class="t" style="left:732.8px;top:581.4px;font-size:25.87px;line-height:25.87px;color:#d8dbe1;font-weight:normal;transform:scaleX(0.8929);transform-origin:left top;">Please note that C and Rust effects are not listed here.</div>
<div class="t" style="left:732.8px;top:614.5px;font-size:26.43px;line-height:26.43px;color:#d8dbe1;font-weight:normal;transform:scaleX(0.8929);transform-origin:left top;">See the "C/Rust" section for more information.</div>
<div class="t" style="left:732.8px;top:668.3px;font-size:25.31px;line-height:25.31px;color:#d8dbe1;font-weight:normal;transform:scaleX(0.8929);transform-origin:left top;">Effect ID:</div>
<div class="r" style="left:843.0px;top:655.0px;width:164.0px;height:54.0px;background:#424654;border:2px solid #2a2d36;border-radius:6px;"></div>
<div class="t" style="left:865.0px;top:668.6px;font-size:24.98px;line-height:24.98px;color:#d8dbe1;font-weight:normal;transform:scaleX(0.8929);transform-origin:left top;">Effect 61</div>
<svg style="left:962.0px;top:676.0px;" width="24" height="12" viewBox="0 0 24 12"><polygon points="0,0 24,0 12,12" fill="#d0d4db"/></svg>
<div class="r" style="left:1059.0px;top:655.0px;width:66.0px;height:54.0px;background:#424654;border:2px solid #2a2d36;border-radius:6px;"></div>
<div class="r" style="left:1077.5px;top:677.0px;width:28.5px;height:10.0px;background:#c8ccd4;"></div>
<div class="r" style="left:1136.5px;top:655.0px;width:66.5px;height:54.0px;background:#424654;border:2px solid #2a2d36;border-radius:6px;"></div>
<div class="r" style="left:1155.5px;top:677.0px;width:28.5px;height:10.0px;background:#c8ccd4;"></div>
<div class="r" style="left:1165.0px;top:667.8px;width:10.0px;height:28.5px;background:#c8ccd4;"></div>
<div class="t" style="left:732.8px;top:733.2px;font-size:24.98px;line-height:24.98px;color:#d8dbe1;font-weight:normal;transform:scaleX(0.8929);transform-origin:left top;">Used by:</div>
<div class="r" style="left:732.0px;top:775.0px;width:2829.0px;height:983.0px;background:#3e424f;border:2px solid #2a2d36;"></div>
<div class="t" style="left:747.3px;top:786.6px;font-size:24.64px;line-height:24.64px;color:#c2c6ce;font-weight:bold;transform:scaleX(0.8929);transform-origin:left top;">ID</div>
<div class="r" style="left:1801.5px;top:1768.0px;width:157.0px;height:87.0px;background:linear-gradient(#3f4350,#424654);border:2px solid #2a2d36;border-radius:6px;"></div>
<svg style="left:1865.0px;top:1776.0px;" width="28" height="28" viewBox="0 0 28 28"><rect x="0" y="0" width="10" height="2" fill="#5b606c"/><rect x="18" y="0" width="10" height="2" fill="#5b606c"/><rect x="0" y="2" width="2" height="2" fill="#5b606c"/><rect x="2" y="2" width="4" height="2" fill="#c0c5ce"/><rect x="6" y="2" width="4" height="2" fill="#7f8592"/><rect x="18" y="2" width="4" height="2" fill="#7f8592"/><rect x="22" y="2" width="4" height="2" fill="#c0c5ce"/><rect x="26" y="2" width="2" height="2" fill="#5b606c"/><rect x="0" y="4" width="2" height="2" fill="#5b606c"/><rect x="2" y="4" width="8" height="2" fill="#c0c5ce"/><rect x="18" y="4" width="4" height="2" fill="#7f8592"/><rect x="22" y="4" width="4" height="2" fill="#c0c5ce"/><rect x="26" y="4" width="2" height="2" fill="#5b606c"/><rect x="0" y="6" width="2" height="2" fill="#5b606c"/><rect x="2" y="6" width="2" height="2" fill="#7f8592"/><rect x="4" y="6" width="6" height="2" fill="#c0c5ce"/><rect x="18" y="6" width="6" height="2" fill="#c0c5ce"/><rect x="24" y="6" width="2" height="2" fill="#7f8592"/><rect x="26" y="6" width="2" height="2" fill="#5b606c"/><rect x="0" y="8" width="2" height="2" fill="#5b606c"/><rect x="2" y="8" width="8" height="2" fill="#7f8592"/><rect x="18" y="8" width="8" height="2" fill="#7f8592"/><rect x="26" y="8" width="2" height="2" fill="#5b606c"/><rect x="0" y="10" width="2" height="2" fill="#5b606c"/><rect x="2" y="10" width="8" height="2" fill="#7f8592"/><rect x="18" y="10" width="8" height="2" fill="#7f8592"/><rect x="26" y="10" width="2" height="2" fill="#5b606c"/><rect x="0" y="12" width="2" height="2" fill="#5b606c"/><rect x="2" y="12" width="4" height="2" fill="#7f8592"/><rect x="22" y="12" width="4" height="2" fill="#7f8592"/><rect x="26" y="12" width="2" height="2" fill="#5b606c"/><rect x="0" y="14" width="2" height="2" fill="#5b606c"/><rect x="2" y="14" width="6" height="2" fill="#7f8592"/><rect x="20" y="14" width="6" height="2" fill="#7f8592"/><rect x="26" y="14" width="2" height="2" fill="#5b606c"/><rect x="0" y="16" width="2" height="2" fill="#5b606c"/><rect x="2" y="16" width="8" height="2" fill="#7f8592"/><rect x="18" y="16" width="8" height="2" fill="#7f8592"/><rect x="26" y="16" width="2" height="2" fill="#5b606c"/><rect x="0" y="18" width="2" height="2" fill="#5b606c"/><rect x="2" y="18" width="2" height="2" fill="#7f8592"/><rect x="4" y="18" width="4" height="2" fill="#c0c5ce"/><rect x="8" y="18" width="4" height="2" fill="#7f8592"/><rect x="16" y="18" width="6" height="2" fill="#7f8592"/><rect x="22" y="18" width="2" height="2" fill="#c0c5ce"/><rect x="24" y="18" width="2" height="2" fill="#7f8592"/><rect x="26" y="18" width="2" height="2" fill="#5b606c"/><rect x="0" y="20" width="2" height="2" fill="#5b606c"/><rect x="2" y="20" width="10" height="2" fill="#7f8592"/><rect x="16" y="20" width="6" height="2" fill="#7f8592"/><rect x="22" y="20" width="2" height="2" fill="#c0c5ce"/><rect x="24" y="20" width="2" height="2" fill="#7f8592"/><rect x="26" y="20" width="2" height="2" fill="#5b606c"/><rect x="0" y="22" width="4" height="2" fill="#5b606c"/><rect x="4" y="22" width="2" height="2" fill="#7f8592"/><rect x="6" y="22" width="6" height="2" fill="#c0c5ce"/><rect x="12" y="22" width="4" height="2" fill="#7f8592"/><rect x="16" y="22" width="10" height="2" fill="#c0c5ce"/><rect x="26" y="22" width="2" height="2" fill="#5b606c"/><rect x="2" y="24" width="26" height="2" fill="#5b606c"/><rect x="4" y="26" width="24" height="2" fill="#5b606c"/></svg>
<div class="t" style="left:1816.0px;top:1820.8px;font-size:25.76px;line-height:25.76px;color:#d8dbe1;font-weight:normal;transform:scaleX(0.8929);transform-origin:left top;">Import Code</div>
<div class="r" style="left:2000.0px;top:1768.0px;width:177.0px;height:43.0px;background:#383b47;border:2px solid #2a2d36;"></div>
<div class="t" style="left:2000.0px;top:1826.3px;font-size:25.98px;line-height:25.98px;color:#d8dbe1;font-weight:normal;transform:scaleX(0.8929);transform-origin:left top;">Clipboard Import</div>
<div class="r" style="left:2217.5px;top:1768.0px;width:155.0px;height:87.0px;background:linear-gradient(#3f4350,#424654);border:2px solid #2a2d36;border-radius:6px;"></div>
<svg style="left:2281.0px;top:1776.0px;" width="28" height="28" viewBox="0 0 28 28"><rect x="0" y="0" width="28" height="2" fill="#5b606c"/><rect x="0" y="2" width="2" height="2" fill="#5b606c"/><rect x="2" y="2" width="4" height="2" fill="#c0c5ce"/><rect x="6" y="2" width="10" height="2" fill="#7f8592"/><rect x="16" y="2" width="2" height="2" fill="#c0c5ce"/><rect x="18" y="2" width="4" height="2" fill="#7f8592"/><rect x="22" y="2" width="4" height="2" fill="#c0c5ce"/><rect x="26" y="2" width="2" height="2" fill="#5b606c"/><rect x="0" y="4" width="2" height="2" fill="#5b606c"/><rect x="2" y="4" width="10" height="2" fill="#c0c5ce"/><rect x="12" y="4" width="6" height="2" fill="#7f8592"/><rect x="18" y="4" width="8" height="2" fill="#c0c5ce"/><rect x="26" y="4" width="2" height="2" fill="#5b606c"/><rect x="0" y="6" width="2" height="2" fill="#5b606c"/><rect x="2" y="6" width="6" height="2" fill="#7f8592"/><rect x="20" y="6" width="6" height="2" fill="#7f8592"/><rect x="26" y="6" width="2" height="2" fill="#5b606c"/><rect x="0" y="8" width="2" height="2" fill="#5b606c"/><rect x="2" y="8" width="4" height="2" fill="#7f8592"/><rect x="22" y="8" width="4" height="2" fill="#7f8592"/><rect x="26" y="8" width="2" height="2" fill="#5b606c"/><rect x="0" y="10" width="2" height="2" fill="#5b606c"/><rect x="2" y="10" width="2" height="2" fill="#7f8592"/><rect x="24" y="10" width="2" height="2" fill="#7f8592"/><rect x="26" y="10" width="2" height="2" fill="#5b606c"/><rect x="0" y="12" width="2" height="2" fill="#5b606c"/><rect x="2" y="12" width="2" height="2" fill="#7f8592"/><rect x="24" y="12" width="2" height="2" fill="#7f8592"/><rect x="26" y="12" width="2" height="2" fill="#5b606c"/><rect x="0" y="14" width="2" height="2" fill="#5b606c"/><rect x="2" y="14" width="8" height="2" fill="#7f8592"/><rect x="18" y="14" width="8" height="2" fill="#7f8592"/><rect x="26" y="14" width="2" height="2" fill="#5b606c"/><rect x="0" y="16" width="2" height="2" fill="#5b606c"/><rect x="2" y="16" width="8" height="2" fill="#7f8592"/><rect x="18" y="16" width="8" height="2" fill="#7f8592"/><rect x="26" y="16" width="2" height="2" fill="#5b606c"/><rect x="0" y="18" width="2" height="2" fill="#5b606c"/><rect x="2" y="18" width="2" height="2" fill="#7f8592"/><rect x="4" y="18" width="4" height="2" fill="#c0c5ce"/><rect x="8" y="18" width="2" height="2" fill="#7f8592"/><rect x="18" y="18" width="4" height="2" fill="#7f8592"/><rect x="22" y="18" width="2" height="2" fill="#c0c5ce"/><rect x="24" y="18" width="2" height="2" fill="#7f8592"/><rect x="26" y="18" width="2" height="2" fill="#5b606c"/><rect x="0" y="20" width="2" height="2" fill="#5b606c"/><rect x="2" y="20" width="8" height="2" fill="#7f8592"/><rect x="18" y="20" width="4" height="2" fill="#7f8592"/><rect x="22" y="20" width="2" height="2" fill="#c0c5ce"/><rect x="24" y="20" width="2" height="2" fill="#7f8592"/><rect x="26" y="20" width="2" height="2" fill="#5b606c"/><rect x="0" y="22" width="4" height="2" fill="#5b606c"/><rect x="4" y="22" width="2" height="2" fill="#7f8592"/><rect x="6" y="22" width="4" height="2" fill="#c0c5ce"/><rect x="18" y="22" width="8" height="2" fill="#c0c5ce"/><rect x="26" y="22" width="2" height="2" fill="#5b606c"/><rect x="2" y="24" width="8" height="2" fill="#5b606c"/><rect x="18" y="24" width="10" height="2" fill="#5b606c"/><rect x="4" y="26" width="6" height="2" fill="#5b606c"/><rect x="18" y="26" width="10" height="2" fill="#5b606c"/></svg>
<div class="t" style="left:2232.0px;top:1820.8px;font-size:25.76px;line-height:25.76px;color:#d8dbe1;font-weight:normal;transform:scaleX(0.8929);transform-origin:left top;">Export Code</div>
<div class="r" style="left:2413.0px;top:1768.0px;width:77.0px;height:87.0px;background:linear-gradient(#3f4350,#424654);border:2px solid #2a2d36;border-radius:6px;"></div>
<svg style="left:2435.0px;top:1774.0px;" width="32" height="32" viewBox="0 0 32 32"><rect x="10" y="0" width="12" height="2" fill="#c0c5ce"/><rect x="6" y="2" width="20" height="2" fill="#c0c5ce"/><rect x="4" y="4" width="8" height="2" fill="#c0c5ce"/><rect x="20" y="4" width="8" height="2" fill="#c0c5ce"/><rect x="2" y="6" width="6" height="2" fill="#c0c5ce"/><rect x="24" y="6" width="6" height="2" fill="#c0c5ce"/><rect x="2" y="8" width="4" height="2" fill="#c0c5ce"/><rect x="12" y="8" width="8" height="2" fill="#c0c5ce"/><rect x="26" y="8" width="4" height="2" fill="#c0c5ce"/><rect x="0" y="10" width="6" height="2" fill="#c0c5ce"/><rect x="10" y="10" width="12" height="2" fill="#c0c5ce"/><rect x="26" y="10" width="6" height="2" fill="#c0c5ce"/><rect x="0" y="12" width="4" height="2" fill="#c0c5ce"/><rect x="10" y="12" width="4" height="2" fill="#c0c5ce"/><rect x="18" y="12" width="4" height="2" fill="#c0c5ce"/><rect x="28" y="12" width="4" height="2" fill="#c0c5ce"/><rect x="0" y="14" width="4" height="2" fill="#c0c5ce"/><rect x="16" y="14" width="6" height="2" fill="#c0c5ce"/><rect x="28" y="14" width="4" height="2" fill="#c0c5ce"/><rect x="0" y="16" width="4" height="2" fill="#c0c5ce"/><rect x="14" y="16" width="6" height="2" fill="#c0c5ce"/><rect x="28" y="16" width="4" height="2" fill="#c0c5ce"/><rect x="0" y="18" width="4" height="2" fill="#c0c5ce"/><rect x="14" y="18" width="4" height="2" fill="#c0c5ce"/><rect x="28" y="18" width="4" height="2" fill="#c0c5ce"/><rect x="0" y="20" width="6" height="2" fill="#c0c5ce"/><rect x="28" y="20" width="4" height="2" fill="#c0c5ce"/><rect x="2" y="22" width="4" height="2" fill="#c0c5ce"/><rect x="14" y="22" width="4" height="2" fill="#c0c5ce"/><rect x="26" y="22" width="4" height="2" fill="#c0c5ce"/><rect x="2" y="24" width="6" height="2" fill="#c0c5ce"/><rect x="14" y="24" width="4" height="2" fill="#c0c5ce"/><rect x="24" y="24" width="6" height="2" fill="#c0c5ce"/><rect x="4" y="26" width="8" height="2" fill="#c0c5ce"/><rect x="20" y="26" width="8" height="2" fill="#c0c5ce"/><rect x="6" y="28" width="20" height="2" fill="#c0c5ce"/><rect x="10" y="30" width="12" height="2" fill="#c0c5ce"/></svg>
<div class="t" style="left:2427.8px;top:1820.4px;font-size:26.21px;line-height:26.21px;color:#d8dbe1;font-weight:normal;transform:scaleX(0.8929);transform-origin:left top;">Help</div>
<div class="r" style="left:1944.0px;top:1867.0px;width:206.0px;height:55.0px;background:linear-gradient(#3f4350,#424654);border:2px solid #2a2d36;border-radius:6px;"></div>
<div class="t" style="left:1958.0px;top:1881.1px;font-size:25.76px;line-height:25.76px;color:#d8dbe1;font-weight:normal;transform:scaleX(0.8929);transform-origin:left top;">Effect Library</div>
<svg style="left:2107.0px;top:1883.0px;" width="28" height="20" viewBox="0 0 28 20"><path d="M0 7 L16 7 L16 0 L28 10 L16 20 L16 13 L0 13Z" fill="#9ba0aa"/></svg>
<div class="r" style="left:2161.5px;top:1867.0px;width:187.0px;height:55.0px;background:linear-gradient(#3f4350,#424654);border:2px solid #2a2d36;border-radius:6px;"></div>
<div class="t" style="left:2176.0px;top:1881.1px;font-size:25.76px;line-height:25.76px;color:#d8dbe1;font-weight:normal;transform:scaleX(0.8929);transform-origin:left top;">ASM Editor</div>
<svg style="left:2305.0px;top:1883.0px;" width="28" height="20" viewBox="0 0 28 20"><path d="M0 7 L16 7 L16 0 L28 10 L16 20 L16 13 L0 13Z" fill="#9ba0aa"/></svg>
<div class="r" style="left:1502.0px;top:524.0px;width:1896.0px;height:1187.0px;border-radius:17px;box-shadow:0 10px 40px 10px rgba(0,0,0,0.22);background:#4e5159;"></div>
<div class="r" style="left:1505px;top:527px;width:1890px;height:1181px;border-radius:14px;overflow:hidden;background:#f0f0f0;">
<div class="r" style="left:0.0px;top:0.0px;width:1890.0px;height:68.0px;background:#f3f3f3;"></div>
<svg style="left:10.0px;top:8.0px;" width="55" height="50" viewBox="0 0 55 50"><defs><radialGradient id="bg1" cx="0.5" cy="0.5" r="0.5"><stop offset="0" stop-color="#7ee05a"/><stop offset="0.6" stop-color="#48c47a"/><stop offset="1" stop-color="#2a86d8"/></radialGradient></defs><rect x="24.8" y="6.8" width="16.2" height="3.6" fill="#8596b8"/><rect x="25.8" y="7.8" width="14.2" height="1.6" fill="#c3cfdf"/><rect x="24.8" y="9.2" width="16.2" height="1.2" fill="#4c5a86"/><rect x="22.3" y="10.4" width="18.7" height="4.3" fill="#8596b8"/><rect x="23.3" y="11.4" width="16.7" height="1.6" fill="#c3cfdf"/><rect x="22.3" y="13.5" width="18.7" height="1.2" fill="#4c5a86"/><rect x="18.3" y="14.7" width="22.7" height="4.0" fill="#8596b8"/><rect x="19.3" y="15.7" width="20.7" height="1.6" fill="#c3cfdf"/><rect x="18.3" y="17.5" width="22.7" height="1.2" fill="#4c5a86"/><rect x="15.8" y="18.7" width="25.2" height="4.0" fill="#8596b8"/><rect x="16.8" y="19.7" width="23.2" height="1.6" fill="#c3cfdf"/><rect x="15.8" y="21.5" width="25.2" height="1.2" fill="#4c5a86"/><rect x="12.2" y="22.7" width="28.8" height="3.9" fill="#8596b8"/><rect x="13.2" y="23.7" width="26.8" height="1.6" fill="#c3cfdf"/><rect x="12.2" y="25.4" width="28.8" height="1.2" fill="#4c5a86"/><rect x="8.6" y="26.6" width="32.4" height="4.4" fill="#8596b8"/><rect x="9.6" y="27.6" width="30.4" height="1.6" fill="#c3cfdf"/><rect x="8.6" y="29.8" width="32.4" height="1.2" fill="#4c5a86"/><rect x="37" y="8" width="4" height="23" fill="#3d6f9a"/><ellipse cx="27" cy="36" rx="20" ry="6.5" fill="url(#bg1)"/><circle cx="35" cy="25" r="6.5" fill="#b8452f"/><circle cx="29" cy="23" r="5" fill="#c2652b"/><circle cx="31" cy="26" r="3" fill="#7a3a8a"/><circle cx="37" cy="31" r="4.5" fill="#c7773a"/><rect x="30" y="28" width="2" height="7" fill="#e07020"/><circle cx="10.5" cy="37.5" r="2.6" fill="#d77ad0"/><circle cx="16.5" cy="33.5" r="2.2" fill="#d660c8"/><circle cx="31.5" cy="39.5" r="2.2" fill="#e08ae0"/><circle cx="44" cy="28.5" r="2.6" fill="#e3a0dc"/><circle cx="42" cy="32.5" r="2.2" fill="#c03040"/><circle cx="26.5" cy="33" r="1.8" fill="#4a90e0"/></svg>
<div class="t" style="left:69.5px;top:19.0px;font-size:30.63px;line-height:30.63px;color:#8a8a8a;font-weight:normal;transform:scaleX(0.9434);transform-origin:left top;">Import Special Process Effect ASM Code...</div>
<svg style="left:1837.0px;top:22.0px;" width="22" height="22" viewBox="0 0 22 22"><path d="M1 1 L21 21 M21 1 L1 21" stroke="#6a6a6a" stroke-width="1.8"/></svg>
<div class="r" style="left:0.0px;top:68.0px;width:1890.0px;height:111.0px;background:#ffffff;"></div>
<svg style="left:38.0px;top:109.0px;" width="32" height="30" viewBox="0 0 32 30"><path d="M31 15 L2 15 M15 2 L2 15 L15 28" stroke="#5c5c5c" stroke-width="2.6" fill="none"/></svg>
<svg style="left:125.0px;top:109.0px;" width="32" height="30" viewBox="0 0 32 30"><path d="M1 15 L30 15 M17 2 L30 15 L17 28" stroke="#9d9d9d" stroke-width="2.6" fill="none"/></svg>
<svg style="left:205.0px;top:117.0px;" width="22" height="14" viewBox="0 0 22 14"><path d="M1 1 L11 12 L21 1" stroke="#5c5c5c" stroke-width="2.4" fill="none"/></svg>
<svg style="left:275.0px;top:109.0px;" width="34" height="34" viewBox="0 0 34 34"><path d="M17 34 L17 2 M2 17 L17 2 L32 17" stroke="#5c5c5c" stroke-width="2.6" fill="none"/></svg>
<div class="r" style="left:344.0px;top:79.0px;width:1013.0px;height:88.0px;border:1.5px solid #d9d9d9;background:#fff;"></div>
<svg style="left:364.0px;top:107.0px;" width="37" height="29" viewBox="0 0 37 29"><path d="M0 3 Q0 0 3 0 L13 0 L17 4 L34 4 Q37 4 37 7 L37 26 Q37 29 34 29 L3 29 Q0 29 0 26Z" fill="#f0b429"/><path d="M0 9 L37 9 L37 26 Q37 29 34 29 L3 29 Q0 29 0 26Z" fill="#ffd557"/></svg>
<div class="t" style="left:418.0px;top:115.6px;font-size:16.96px;line-height:16.96px;color:#444;font-weight:normal;transform:scaleX(0.9434);transform-origin:left top;">&laquo;</div>
<div class="t" style="left:449.3px;top:109.5px;font-size:29.57px;line-height:29.57px;color:#000;font-weight:normal;transform:scaleX(0.9434);transform-origin:left top;">Special Processes</div>
<svg style="left:697.0px;top:115.0px;" width="14" height="16" viewBox="0 0 14 16"><path d="M2 1 L11 8 L2 15" stroke="#444" stroke-width="2.2" fill="none"/></svg>
<div class="t" style="left:729.7px;top:109.5px;font-size:29.57px;line-height:29.57px;color:#000;font-weight:normal;transform:scaleX(0.9434);transform-origin:left top;">EU</div>
<svg style="left:1218.0px;top:112.0px;" width="28" height="16" viewBox="0 0 28 16"><path d="M1.5 1.5 L13 13 L24.5 1.5" stroke="#666" stroke-width="2.4" fill="none"/></svg>
<svg style="left:1298.0px;top:103.0px;" width="34" height="34" viewBox="0 0 34 34"><path d="M31.4 16.7 A14.4 14.4 0 1 1 28.0 7.4" stroke="#666" stroke-width="2.3" fill="none"/><path d="M30.2 1.5 L30.2 11 L21 11" stroke="#666" stroke-width="2.3" fill="none"/></svg>
<div class="r" style="left:1371.0px;top:79.0px;width:506.0px;height:88.0px;border:1.5px solid #d9d9d9;background:#fff;"></div>
<div class="t" style="left:1385.0px;top:111.6px;font-size:28.30px;line-height:28.30px;color:#6b6b6b;font-weight:normal;transform:scaleX(0.9434);transform-origin:left top;">Search EU</div>
<svg style="left:1832.0px;top:109.0px;" width="31" height="31" viewBox="0 0 31 31"><circle cx="21" cy="10" r="7.5" fill="none" stroke="#5c5c5c" stroke-width="3.5"/><path d="M15 16 L2 29" stroke="#5c5c5c" stroke-width="4.5" stroke-linecap="round"/></svg>
<div class="r" style="left:0.0px;top:179.0px;width:1890.0px;height:79.0px;background:#f3f4f6;"></div>
<div class="t" style="left:47.0px;top:203.5px;font-size:31.16px;line-height:31.16px;color:#1c3a66;font-weight:normal;transform:scaleX(0.9434);transform-origin:left top;">Organize</div>
<svg style="left:177.0px;top:215.0px;" width="9" height="6" viewBox="0 0 9 6"><polygon points="0,0 9,0 4.5,5" fill="#1c3a66"/></svg>
<div class="t" style="left:260.0px;top:202.8px;font-size:32.01px;line-height:32.01px;color:#1c3a66;font-weight:normal;transform:scaleX(0.9434);transform-origin:left top;">New folder</div>
<div class="r" style="left:1602.0px;top:198.0px;width:40.0px;height:38.0px;background:#e9eaec;border-radius:4px;"></div>
<svg style="left:1609.0px;top:203.0px;" width="28" height="28" viewBox="0 0 28 28"><g stroke="#111" stroke-width="2.2"><path d="M0 2 L28 2"/><path d="M0 10 L28 10"/><path d="M0 18 L28 18"/><path d="M0 26 L28 26"/></g></svg>
<svg style="left:1662.0px;top:214.0px;" width="10" height="6" viewBox="0 0 10 6"><polygon points="0,0 10,0 5,5.5" fill="#1c3a66"/></svg>
<svg style="left:1724.0px;top:202.0px;" width="36" height="30" viewBox="0 0 36 30"><rect x="1" y="1" width="34" height="28" rx="2" fill="#fff" stroke="#111" stroke-width="2.4"/><rect x="19" y="3" width="14" height="24" fill="#1a8fe3"/></svg>
<svg style="left:1811.0px;top:196.0px;" width="41" height="41" viewBox="0 0 41 41"><circle cx="20.5" cy="20.5" r="20" fill="#1583d8"/><text x="20.5" y="31" text-anchor="middle" font-size="29" fill="#fff" font-family="Liberation Sans">?</text></svg>
<div class="r" style="left:1.0px;top:258.0px;width:349.0px;height:679.0px;background:#ffffff;"></div>
<div class="r" style="left:6.0px;top:259.0px;width:343.0px;height:59.0px;background:#d9d9d9;"></div>
<svg style="left:67.0px;top:274.0px;" width="37" height="29" viewBox="0 0 37 29"><path d="M0 3 Q0 0 3 0 L13 0 L17 4 L34 4 Q37 4 37 7 L37 26 Q37 29 34 29 L3 29 Q0 29 0 26Z" fill="#1b6fc2"/><path d="M0 8 L37 8 L37 26 Q37 29 34 29 L3 29 Q0 29 0 26Z" fill="#2d9be8"/><path d="M11 23 Q8 23 8 20 Q8 17 11 17 Q12 13 17 13 Q21 13 23 16 Q28 16 28 20 Q28 23 25 23Z" fill="#fff"/></svg>
<div class="t" style="left:112.0px;top:275.0px;font-size:30.32px;line-height:30.32px;color:#000;font-weight:normal;transform:scaleX(0.9434);transform-origin:left top;">parker - Personal</div>
<div class="r" style="left:25.0px;top:347.5px;width:306.0px;height:2.0px;background:#d5d5d5;"></div>
<svg style="left:65.0px;top:396.5px;" width="39" height="30" viewBox="0 0 39 30"><rect x="0" y="0" width="39" height="30" rx="2" fill="#1e9bd7"/><rect x="0" y="0" width="39" height="10" fill="#4cc2ef"/><rect x="32" y="26" width="6" height="3" fill="#fff"/></svg>
<div class="t" style="left:112.0px;top:396.4px;font-size:30.74px;line-height:30.74px;color:#000;font-weight:normal;transform:scaleX(0.9434);transform-origin:left top;">Desktop</div>
<svg style="left:315.0px;top:397.5px;" width="28" height="28" viewBox="0 0 28 28"><path d="M10 4 L18 0 L28 10 L24 18 L19 16 L12 22 Q8 16 6 14 L12 8 Z" fill="#8a9096"/><path d="M9 19 L1 27" stroke="#8a9096" stroke-width="3"/></svg>
<svg style="left:67.0px;top:456.3px;" width="37" height="29" viewBox="0 0 37 29"><path d="M0 3 Q0 0 3 0 L13 0 L17 4 L34 4 Q37 4 37 7 L37 26 Q37 29 34 29 L3 29 Q0 29 0 26Z" fill="#138a5e"/><path d="M0 8 L37 8 L37 26 Q37 29 34 29 L3 29 Q0 29 0 26Z" fill="#1fb07a"/><path d="M18.5 11 L18.5 22 M13 17 L18.5 22 L24 17 M12 25 L25 25" stroke="#fff" stroke-width="2" fill="none"/></svg>
<div class="t" style="left:112.0px;top:456.2px;font-size:30.74px;line-height:30.74px;color:#000;font-weight:normal;transform:scaleX(0.9434);transform-origin:left top;">Downloads</div>
<svg style="left:315.0px;top:457.3px;" width="28" height="28" viewBox="0 0 28 28"><path d="M10 4 L18 0 L28 10 L24 18 L19 16 L12 22 Q8 16 6 14 L12 8 Z" fill="#8a9096"/><path d="M9 19 L1 27" stroke="#8a9096" stroke-width="3"/></svg>
<svg style="left:67.0px;top:516.1px;" width="37" height="29" viewBox="0 0 37 29"><path d="M0 3 Q0 0 3 0 L13 0 L17 4 L34 4 Q37 4 37 7 L37 26 Q37 29 34 29 L3 29 Q0 29 0 26Z" fill="#6b7a90"/><path d="M0 8 L37 8 L37 26 Q37 29 34 29 L3 29 Q0 29 0 26Z" fill="#94a3b8"/><path d="M12 13 L26 13 M12 17 L26 17 M12 21 L26 21" stroke="#fff" stroke-width="2"/><rect x="12" y="12" width="5" height="5" fill="#fff"/></svg>
<div class="t" style="left:112.0px;top:516.0px;font-size:30.74px;line-height:30.74px;color:#000;font-weight:normal;transform:scaleX(0.9434);transform-origin:left top;">Documents</div>
<svg style="left:315.0px;top:517.1px;" width="28" height="28" viewBox="0 0 28 28"><path d="M10 4 L18 0 L28 10 L24 18 L19 16 L12 22 Q8 16 6 14 L12 8 Z" fill="#8a9096"/><path d="M9 19 L1 27" stroke="#8a9096" stroke-width="3"/></svg>
<svg style="left:67.0px;top:575.9px;" width="37" height="29" viewBox="0 0 37 29"><path d="M0 3 Q0 0 3 0 L13 0 L17 4 L34 4 Q37 4 37 7 L37 26 Q37 29 34 29 L3 29 Q0 29 0 26Z" fill="#c8562e"/><path d="M0 8 L37 8 L37 26 Q37 29 34 29 L3 29 Q0 29 0 26Z" fill="#e46f4c"/><path d="M19 11 L19 22" stroke="#fff" stroke-width="2.5"/><circle cx="16.5" cy="22.5" r="3" fill="#fff"/><path d="M19 11 L23 13" stroke="#fff" stroke-width="2.5"/></svg>
<div class="t" style="left:112.0px;top:575.8px;font-size:30.74px;line-height:30.74px;color:#000;font-weight:normal;transform:scaleX(0.9434);transform-origin:left top;">Music</div>
<svg style="left:315.0px;top:576.9px;" width="28" height="28" viewBox="0 0 28 28"><path d="M10 4 L18 0 L28 10 L24 18 L19 16 L12 22 Q8 16 6 14 L12 8 Z" fill="#8a9096"/><path d="M9 19 L1 27" stroke="#8a9096" stroke-width="3"/></svg>
<svg style="left:67.0px;top:635.7px;" width="37" height="29" viewBox="0 0 37 29"><path d="M0 3 Q0 0 3 0 L13 0 L17 4 L34 4 Q37 4 37 7 L37 26 Q37 29 34 29 L3 29 Q0 29 0 26Z" fill="#1a6fcf"/><path d="M0 8 L37 8 L37 26 Q37 29 34 29 L3 29 Q0 29 0 26Z" fill="#2d8fe8"/><path d="M0 29 L15 12 L28 29Z" fill="#fff"/><circle cx="28" cy="14" r="3" fill="#fff"/></svg>
<div class="t" style="left:112.0px;top:635.6px;font-size:30.74px;line-height:30.74px;color:#000;font-weight:normal;transform:scaleX(0.9434);transform-origin:left top;">Pictures</div>
<svg style="left:315.0px;top:636.7px;" width="28" height="28" viewBox="0 0 28 28"><path d="M10 4 L18 0 L28 10 L24 18 L19 16 L12 22 Q8 16 6 14 L12 8 Z" fill="#8a9096"/><path d="M9 19 L1 27" stroke="#8a9096" stroke-width="3"/></svg>
<svg style="left:67.0px;top:695.5px;" width="37" height="29" viewBox="0 0 37 29"><path d="M0 3 Q0 0 3 0 L13 0 L17 4 L34 4 Q37 4 37 7 L37 26 Q37 29 34 29 L3 29 Q0 29 0 26Z" fill="#6a3bc8"/><path d="M0 8 L37 8 L37 26 Q37 29 34 29 L3 29 Q0 29 0 26Z" fill="#8b55e6"/><path d="M14 12 L25 18.5 L14 25Z" fill="#fff"/><g fill="#4d2a99"><rect x="2" y="11" width="3" height="3"/><rect x="2" y="17" width="3" height="3"/><rect x="2" y="23" width="3" height="3"/><rect x="32" y="11" width="3" height="3"/><rect x="32" y="17" width="3" height="3"/><rect x="32" y="23" width="3" height="3"/></g></svg>
<div class="t" style="left:112.0px;top:695.4px;font-size:30.74px;line-height:30.74px;color:#000;font-weight:normal;transform:scaleX(0.9434);transform-origin:left top;">Videos</div>
<svg style="left:315.0px;top:696.5px;" width="28" height="28" viewBox="0 0 28 28"><path d="M10 4 L18 0 L28 10 L24 18 L19 16 L12 22 Q8 16 6 14 L12 8 Z" fill="#8a9096"/><path d="M9 19 L1 27" stroke="#8a9096" stroke-width="3"/></svg>
<svg style="left:67.0px;top:755.3px;" width="37" height="29" viewBox="0 0 37 29"><path d="M0 3 Q0 0 3 0 L13 0 L17 4 L34 4 Q37 4 37 7 L37 26 Q37 29 34 29 L3 29 Q0 29 0 26Z" fill="#f0b429"/><path d="M0 8 L37 8 L37 26 Q37 29 34 29 L3 29 Q0 29 0 26Z" fill="#ffd557"/></svg>
<div class="t" style="left:112.0px;top:755.2px;font-size:30.74px;line-height:30.74px;color:#000;font-weight:normal;transform:scaleX(0.9434);transform-origin:left top;">SaveRAM</div>
<svg style="left:67.0px;top:815.1px;" width="37" height="29" viewBox="0 0 37 29"><path d="M0 3 Q0 0 3 0 L13 0 L17 4 L34 4 Q37 4 37 7 L37 26 Q37 29 34 29 L3 29 Q0 29 0 26Z" fill="#f0b429"/><path d="M0 8 L37 8 L37 26 Q37 29 34 29 L3 29 Q0 29 0 26Z" fill="#ffd557"/></svg>
<div class="t" style="left:112.0px;top:815.9px;font-size:29.68px;line-height:29.68px;color:#000;font-weight:normal;transform:scaleX(0.9434);transform-origin:left top;">Special Processes</div>
<svg style="left:67.0px;top:874.9px;" width="37" height="29" viewBox="0 0 37 29"><path d="M0 3 Q0 0 3 0 L13 0 L17 4 L34 4 Q37 4 37 7 L37 26 Q37 29 34 29 L3 29 Q0 29 0 26Z" fill="#f0b429"/><path d="M0 8 L37 8 L37 26 Q37 29 34 29 L3 29 Q0 29 0 26Z" fill="#ffd557"/></svg>
<div class="t" style="left:112.0px;top:874.8px;font-size:30.74px;line-height:30.74px;color:#000;font-weight:normal;transform:scaleX(0.9434);transform-origin:left top;">Clean Roms</div>
<svg style="left:67.0px;top:929.0px;" width="37" height="8" viewBox="0 0 37 8"><path d="M0 3 Q0 0 3 0 L13 0 L17 4 L37 4 L37 8 L0 8Z" fill="#f0b429"/></svg>
<div class="r" style="left:350.0px;top:258.0px;width:42.0px;height:679.0px;background:#f0f0f0;"></div>
<div class="r" style="left:367.0px;top:364.0px;width:6.0px;height:312.0px;background:#858585;border-radius:3px;"></div>
<div class="r" style="left:393.0px;top:258.0px;width:2.0px;height:637.0px;background:#e6e6e6;"></div>
<div class="r" style="left:397.0px;top:258.0px;width:1493.0px;height:637.0px;background:#ffffff;"></div>
<div class="t" style="left:446.0px;top:278.8px;font-size:30.85px;line-height:30.85px;color:#4b5b78;font-weight:normal;transform:scaleX(0.9434);transform-origin:left top;">Name</div>
<div class="t" style="left:1098.0px;top:278.8px;font-size:30.85px;line-height:30.85px;color:#4b5b78;font-weight:normal;transform:scaleX(0.9434);transform-origin:left top;">Status</div>
<div class="t" style="left:1298.0px;top:278.0px;font-size:31.80px;line-height:31.80px;color:#4b5b78;font-weight:normal;transform:scaleX(0.9434);transform-origin:left top;">Date modified</div>
<div class="t" style="left:1657.6px;top:278.8px;font-size:30.85px;line-height:30.85px;color:#4b5b78;font-weight:normal;transform:scaleX(0.9434);transform-origin:left top;">Type</div>
<svg style="left:747.0px;top:263.0px;" width="16" height="9" viewBox="0 0 16 9"><path d="M1 8 L8 1 L15 8" stroke="#6b6b6b" stroke-width="1.6" fill="none"/></svg>
<div class="r" style="left:1081.0px;top:258.0px;width:1.5px;height:67.0px;background:#e5e5e5;"></div>
<div class="r" style="left:1281.0px;top:258.0px;width:1.5px;height:67.0px;background:#e5e5e5;"></div>
<div class="r" style="left:1641.0px;top:258.0px;width:1.5px;height:67.0px;background:#e5e5e5;"></div>
<svg style="left:447.0px;top:353.2px;" width="34" height="34" viewBox="0 0 34 34"><path d="M6 1 L22 1 L31 10 L31 31 L6 31 Z" fill="#fff" stroke="#333" stroke-width="2"/><path d="M22 1 L22 10 L31 10" fill="none" stroke="#333" stroke-width="2"/><rect x="0" y="22" width="22" height="11" fill="#fff"/><text x="11" y="32" text-anchor="middle" font-size="10" font-weight="bold" fill="#333" font-family="Liberation Sans">ASM</text></svg>
<div class="t" style="left:497.7px;top:355.4px;font-size:30.32px;line-height:30.32px;color:#000;font-weight:normal;transform:scaleX(0.9434);transform-origin:left top;">CheckTSPress.asm</div>
<svg style="left:1095.0px;top:351.7px;" width="30" height="30" viewBox="0 0 30 30"><circle cx="15" cy="15" r="13.5" fill="none" stroke="#108a2c" stroke-width="2.2"/><path d="M8 15.5 L13 20 L22 10" stroke="#108a2c" stroke-width="2.2" fill="none"/></svg>
<div class="t" style="left:1298.0px;top:354.7px;font-size:31.16px;line-height:31.16px;color:#5d5d5d;font-weight:normal;transform:scaleX(0.9434);transform-origin:left top;">8/9/2025 4:48 PM</div>
<div class="t" style="left:1657.6px;top:354.7px;font-size:31.16px;line-height:31.16px;color:#5d5d5d;font-weight:normal;transform:scaleX(0.9434);transform-origin:left top;">Assembler Source</div>
<svg style="left:447.0px;top:405.4px;" width="34" height="34" viewBox="0 0 34 34"><path d="M6 1 L22 1 L31 10 L31 31 L6 31 Z" fill="#fff" stroke="#333" stroke-width="2"/><path d="M22 1 L22 10 L31 10" fill="none" stroke="#333" stroke-width="2"/><rect x="0" y="22" width="22" height="11" fill="#fff"/><text x="11" y="32" text-anchor="middle" font-size="10" font-weight="bold" fill="#333" font-family="Liberation Sans">ASM</text></svg>
<div class="t" style="left:497.7px;top:407.6px;font-size:30.32px;line-height:30.32px;color:#000;font-weight:normal;transform:scaleX(0.9434);transform-origin:left top;">get_favorite_config_color.asm</div>
<svg style="left:1095.0px;top:403.9px;" width="30" height="30" viewBox="0 0 30 30"><circle cx="15" cy="15" r="13.5" fill="none" stroke="#108a2c" stroke-width="2.2"/><path d="M8 15.5 L13 20 L22 10" stroke="#108a2c" stroke-width="2.2" fill="none"/></svg>
<div class="t" style="left:1298.0px;top:406.9px;font-size:31.16px;line-height:31.16px;color:#5d5d5d;font-weight:normal;transform:scaleX(0.9434);transform-origin:left top;">8/9/2025 4:48 PM</div>
<div class="t" style="left:1657.6px;top:406.9px;font-size:31.16px;line-height:31.16px;color:#5d5d5d;font-weight:normal;transform:scaleX(0.9434);transform-origin:left top;">Assembler Source</div>
<svg style="left:447.0px;top:457.6px;" width="34" height="34" viewBox="0 0 34 34"><path d="M6 1 L22 1 L31 10 L31 31 L6 31 Z" fill="#fff" stroke="#333" stroke-width="2"/><path d="M22 1 L22 10 L31 10" fill="none" stroke="#333" stroke-width="2"/><rect x="0" y="22" width="22" height="11" fill="#fff"/><text x="11" y="32" text-anchor="middle" font-size="10" font-weight="bold" fill="#333" font-family="Liberation Sans">ASM</text></svg>
<div class="t" style="left:497.7px;top:459.8px;font-size:30.32px;line-height:30.32px;color:#000;font-weight:normal;transform:scaleX(0.9434);transform-origin:left top;">MoveText2TopScreen.asm</div>
<svg style="left:1095.0px;top:456.1px;" width="30" height="30" viewBox="0 0 30 30"><circle cx="15" cy="15" r="13.5" fill="none" stroke="#108a2c" stroke-width="2.2"/><path d="M8 15.5 L13 20 L22 10" stroke="#108a2c" stroke-width="2.2" fill="none"/></svg>
<div class="t" style="left:1298.0px;top:459.1px;font-size:31.16px;line-height:31.16px;color:#5d5d5d;font-weight:normal;transform:scaleX(0.9434);transform-origin:left top;">8/9/2025 4:48 PM</div>
<div class="t" style="left:1657.6px;top:459.1px;font-size:31.16px;line-height:31.16px;color:#5d5d5d;font-weight:normal;transform:scaleX(0.9434);transform-origin:left top;">Assembler Source</div>
<svg style="left:447.0px;top:509.8px;" width="34" height="34" viewBox="0 0 34 34"><path d="M6 1 L22 1 L31 10 L31 31 L6 31 Z" fill="#fff" stroke="#333" stroke-width="2"/><path d="M22 1 L22 10 L31 10" fill="none" stroke="#333" stroke-width="2"/><rect x="0" y="22" width="22" height="11" fill="#fff"/><text x="11" y="32" text-anchor="middle" font-size="10" font-weight="bold" fill="#333" font-family="Liberation Sans">ASM</text></svg>
<div class="t" style="left:497.7px;top:512.0px;font-size:30.32px;line-height:30.32px;color:#000;font-weight:normal;transform:scaleX(0.9434);transform-origin:left top;">ReturnTSPFrames.asm</div>
<svg style="left:1095.0px;top:508.3px;" width="30" height="30" viewBox="0 0 30 30"><circle cx="15" cy="15" r="13.5" fill="none" stroke="#108a2c" stroke-width="2.2"/><path d="M8 15.5 L13 20 L22 10" stroke="#108a2c" stroke-width="2.2" fill="none"/></svg>
<div class="t" style="left:1298.0px;top:511.3px;font-size:31.16px;line-height:31.16px;color:#5d5d5d;font-weight:normal;transform:scaleX(0.9434);transform-origin:left top;">8/9/2025 4:48 PM</div>
<div class="t" style="left:1657.6px;top:511.3px;font-size:31.16px;line-height:31.16px;color:#5d5d5d;font-weight:normal;transform:scaleX(0.9434);transform-origin:left top;">Assembler Source</div>
<svg style="left:447.0px;top:562.0px;" width="34" height="34" viewBox="0 0 34 34"><path d="M6 1 L22 1 L31 10 L31 31 L6 31 Z" fill="#fff" stroke="#333" stroke-width="2"/><path d="M22 1 L22 10 L31 10" fill="none" stroke="#333" stroke-width="2"/><rect x="0" y="22" width="22" height="11" fill="#fff"/><text x="11" y="32" text-anchor="middle" font-size="10" font-weight="bold" fill="#333" font-family="Liberation Sans">ASM</text></svg>
<div class="t" style="left:497.7px;top:564.2px;font-size:30.32px;line-height:30.32px;color:#000;font-weight:normal;transform:scaleX(0.9434);transform-origin:left top;">Set_Demo_Characters.asm</div>
<svg style="left:1095.0px;top:560.5px;" width="30" height="30" viewBox="0 0 30 30"><circle cx="15" cy="15" r="13.5" fill="none" stroke="#108a2c" stroke-width="2.2"/><path d="M8 15.5 L13 20 L22 10" stroke="#108a2c" stroke-width="2.2" fill="none"/></svg>
<div class="t" style="left:1298.0px;top:563.5px;font-size:31.16px;line-height:31.16px;color:#5d5d5d;font-weight:normal;transform:scaleX(0.9434);transform-origin:left top;">8/9/2025 4:48 PM</div>
<div class="t" style="left:1657.6px;top:563.5px;font-size:31.16px;line-height:31.16px;color:#5d5d5d;font-weight:normal;transform:scaleX(0.9434);transform-origin:left top;">Assembler Source</div>
<svg style="left:447.0px;top:614.2px;" width="34" height="34" viewBox="0 0 34 34"><path d="M6 1 L22 1 L31 10 L31 31 L6 31 Z" fill="#fff" stroke="#333" stroke-width="2"/><path d="M22 1 L22 10 L31 10" fill="none" stroke="#333" stroke-width="2"/><rect x="0" y="22" width="22" height="11" fill="#fff"/><text x="11" y="32" text-anchor="middle" font-size="10" font-weight="bold" fill="#333" font-family="Liberation Sans">ASM</text></svg>
<div class="t" style="left:497.7px;top:616.4px;font-size:30.32px;line-height:30.32px;color:#000;font-weight:normal;transform:scaleX(0.9434);transform-origin:left top;">set_frame_color.asm</div>
<svg style="left:1095.0px;top:612.7px;" width="30" height="30" viewBox="0 0 30 30"><circle cx="15" cy="15" r="13.5" fill="none" stroke="#108a2c" stroke-width="2.2"/><path d="M8 15.5 L13 20 L22 10" stroke="#108a2c" stroke-width="2.2" fill="none"/></svg>
<div class="t" style="left:1298.0px;top:615.7px;font-size:31.16px;line-height:31.16px;color:#5d5d5d;font-weight:normal;transform:scaleX(0.9434);transform-origin:left top;">8/9/2025 4:48 PM</div>
<div class="t" style="left:1657.6px;top:615.7px;font-size:31.16px;line-height:31.16px;color:#5d5d5d;font-weight:normal;transform:scaleX(0.9434);transform-origin:left top;">Assembler Source</div>
<div class="r" style="left:437.0px;top:653.0px;width:1453.0px;height:54.0px;background:#d9d9d9;"></div>
<svg style="left:447.0px;top:666.4px;" width="34" height="34" viewBox="0 0 34 34"><path d="M6 1 L22 1 L31 10 L31 31 L6 31 Z" fill="#fff" stroke="#333" stroke-width="2"/><path d="M22 1 L22 10 L31 10" fill="none" stroke="#333" stroke-width="2"/><rect x="0" y="22" width="22" height="11" fill="#fff"/><text x="11" y="32" text-anchor="middle" font-size="10" font-weight="bold" fill="#333" font-family="Liberation Sans">ASM</text></svg>
<div class="t" style="left:497.7px;top:668.6px;font-size:30.32px;line-height:30.32px;color:#000;font-weight:normal;transform:scaleX(0.9434);transform-origin:left top;">starter_setter.asm</div>
<svg style="left:1095.0px;top:664.9px;" width="30" height="30" viewBox="0 0 30 30"><circle cx="15" cy="15" r="13.5" fill="none" stroke="#108a2c" stroke-width="2.2"/><path d="M8 15.5 L13 20 L22 10" stroke="#108a2c" stroke-width="2.2" fill="none"/></svg>
<div class="t" style="left:1298.0px;top:667.9px;font-size:31.16px;line-height:31.16px;color:#000;font-weight:normal;transform:scaleX(0.9434);transform-origin:left top;">8/3/2025 10:34 PM</div>
<div class="t" style="left:1657.6px;top:667.9px;font-size:31.16px;line-height:31.16px;color:#000;font-weight:normal;transform:scaleX(0.9434);transform-origin:left top;">Assembler Source</div>
<div class="r" style="left:445.0px;top:913.0px;width:1182.0px;height:6.0px;background:#858585;border-radius:3px;"></div>
<div class="t" style="left:318.0px;top:1022.5px;font-size:30.00px;line-height:30.00px;color:#000;font-weight:normal;transform:scaleX(0.9434);transform-origin:left top;">File name:</div>
<div class="r" style="left:464.0px;top:1010.5px;width:883.0px;height:49.5px;background:#fff;border:1.5px solid #7a7a7a;"></div>
<div class="t" style="left:469.0px;top:1022.2px;font-size:30.32px;line-height:30.32px;color:#000;font-weight:normal;transform:scaleX(0.9434);transform-origin:left top;">starter_setter.asm</div>
<svg style="left:1315.0px;top:1029.0px;" width="20" height="11" viewBox="0 0 20 11"><path d="M1 1 L10 10 L19 1" stroke="#444" stroke-width="1.8" fill="none"/></svg>
<div class="r" style="left:1377.0px;top:1010.5px;width:470.0px;height:48.0px;background:#fdfdfd;border:1.5px solid #d5d5d5;border-radius:3px;"></div>
<div class="t" style="left:1382.0px;top:1022.0px;font-size:30.00px;line-height:30.00px;color:#000;font-weight:normal;transform:scaleX(0.9434);transform-origin:left top;">Any Files (*)</div>
<svg style="left:1815.0px;top:1029.0px;" width="20" height="11" viewBox="0 0 20 11"><path d="M1 1 L10 10 L19 1" stroke="#444" stroke-width="1.8" fill="none"/></svg>
<div class="r" style="left:1378.0px;top:1074.5px;width:217.5px;height:62.0px;background:#fdfdfd;border:2px solid #0067c0;border-radius:5px;"></div>
<div class="t" style="left:486.5px;width:2000px;text-align:center;top:1090.7px;font-size:31.59px;line-height:31.59px;color:#000;font-weight:normal;transform:scaleX(0.9434);transform-origin:center top;">Open</div>
<div class="r" style="left:1628.0px;top:1074.5px;width:218.0px;height:62.0px;background:#fdfdfd;border:1.5px solid #d0d0d0;border-radius:5px;"></div>
<div class="t" style="left:737.0px;width:2000px;text-align:center;top:1092.3px;font-size:29.68px;line-height:29.68px;color:#000;font-weight:normal;transform:scaleX(0.9434);transform-origin:center top;">Cancel</div>
<svg style="left:1863.0px;top:1157.0px;" width="20" height="20" viewBox="0 0 20 20"><g fill="#b5b5b5"><rect x="14" y="0" width="4" height="4"/><rect x="8" y="7" width="4" height="4"/><rect x="14" y="7" width="4" height="4"/><rect x="2" y="14" width="4" height="4"/><rect x="8" y="14" width="4" height="4"/><rect x="14" y="14" width="4" height="4"/></g></svg>
</div>
</body></html>
